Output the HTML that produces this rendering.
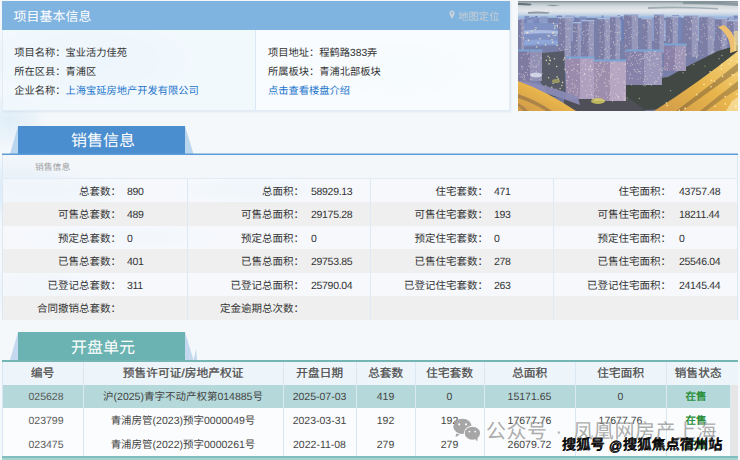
<!DOCTYPE html>
<html lang="zh-CN">
<head>
<meta charset="utf-8">
<style>
*{margin:0;padding:0;box-sizing:border-box}
html,body{width:740px;height:460px;overflow:hidden}
body{position:relative;text-rendering:geometricPrecision;font-family:"Liberation Sans",sans-serif;background:#f2f6fa;color:#333}
.a{position:absolute;white-space:nowrap}
#bg{position:absolute;left:0;top:0;width:740px;height:460px}
/* top card */
#card{left:2px;top:1px;width:508px;height:110px;background:rgba(249,252,255,0.8);border:1px solid #e2ecf5;box-shadow:1px 1px 2px rgba(180,200,220,0.35)}
#cardhd{left:2px;top:1px;width:508px;height:29px;background:#7fb3e0}
.t13{font-size:13px;color:#fff;line-height:13px}
.inf{font-size:10.25px;line-height:12px;color:#333}
.lnk{color:#2274cc}
/* photo */
#photo{left:518px;top:1px;width:220px;height:110px;overflow:hidden}
/* sales */
.tabtxt{font-size:16px;line-height:16px;color:#fff;font-weight:350}
.lbl{font-size:10.5px;line-height:12px;color:#333;text-align:right}
.val{font-size:10.5px;line-height:12px;color:#333;letter-spacing:-0.3px}
.row{position:absolute;left:2px;width:736px;height:23.5px}
.th{font-size:11.75px;line-height:12px;color:#555;font-weight:500;text-shadow:0.35px 0 0 rgba(85,85,85,0.8);text-align:center}
.wm1{font-size:20px;line-height:24px;letter-spacing:0.55px;color:rgba(150,150,150,0.8)}
.wm2{font-size:14.2px;line-height:16px;color:#111;font-weight:normal;text-shadow:-0.5px 0.5px 0 #000,0.5px 0 0 #222}
.td.st{color:#2b8f3b;font-weight:bold}
.td{font-size:10.5px;line-height:12px;color:#444;text-align:center}
</style>
</head>
<body>
<svg id="bg" width="740" height="460" viewBox="0 0 740 460">
  <defs>
    <radialGradient id="cl" cx="50%" cy="50%" r="50%">
      <stop offset="0" stop-color="#d6e9f7" stop-opacity="1"/>
      <stop offset="0.6" stop-color="#dcecf8" stop-opacity="0.6"/>
      <stop offset="1" stop-color="#e4f0fa" stop-opacity="0"/>
    </radialGradient>
  </defs>
  <rect width="740" height="460" fill="#f5f8fb"/>
  <ellipse cx="20" cy="190" rx="70" ry="35" fill="url(#cl)"/>
  <ellipse cx="40" cy="290" rx="60" ry="30" fill="url(#cl)" opacity="0.6"/>
  <ellipse cx="90" cy="60" rx="110" ry="45" fill="url(#cl)"/>
  <ellipse cx="10" cy="120" rx="40" ry="30" fill="url(#cl)" opacity="0.7"/>
  <ellipse cx="400" cy="70" rx="90" ry="35" fill="url(#cl)" opacity="0.4"/>
  <ellipse cx="60" cy="190" rx="90" ry="16" fill="url(#cl)"/>
  <ellipse cx="250" cy="190" rx="80" ry="14" fill="url(#cl)" opacity="0.9"/>
  <ellipse cx="120" cy="237" rx="110" ry="14" fill="url(#cl)" opacity="0.5"/>
</svg>

<!-- top card -->
<div class="a" id="card"></div>
<div class="a" style="left:3px;top:30px;width:252px;height:80px;background:rgba(225,239,250,0.25)"></div>
<div class="a" style="left:255px;top:30px;width:1px;height:80px;background:#d9e8f4"></div>
<div class="a" id="cardhd"></div>
<div class="a t13" style="left:13.5px;top:9.5px">项目基本信息</div>
<div class="a" style="left:449px;top:10.3px;width:6px;height:10px">
  <svg style="display:block" width="6" height="10" viewBox="0 0 6 10"><path d="M3 0.5C1.5 0.5 0.4 1.6 0.4 3.1C0.4 5 3 9 3 9C3 9 5.6 5 5.6 3.1C5.6 1.6 4.5 0.5 3 0.5Z" fill="#c9d3dc"/><circle cx="3" cy="3.1" r="1" fill="#7fb3e0"/></svg>
</div>
<div class="a" style="left:458px;top:12px;font-size:10.3px;line-height:12px;color:#c6ced4">地图定位</div>

<div class="a inf" style="left:14.3px;top:48px">项目名称：宝业活力佳苑</div>
<div class="a inf" style="left:14.3px;top:66.7px">所在区县：青浦区</div>
<div class="a inf" style="left:14.3px;top:86.2px">企业名称：<span class="lnk">上海宝延房地产开发有限公司</span></div>
<div class="a inf" style="left:268px;top:48px">项目地址：程鹤路383弄</div>
<div class="a inf" style="left:268px;top:66.7px">所属板块：青浦北部板块</div>
<div class="a inf lnk" style="left:268px;top:86.2px">点击查看楼盘介绍</div>

<!-- photo -->
<div class="a" id="photo">
<svg style="display:block" width="220" height="110" viewBox="0 0 220 110">
<defs>
<linearGradient id="sky" x1="0" y1="0" x2="0" y2="1">
<stop offset="0" stop-color="#7c8a92"/>
<stop offset="0.02" stop-color="#b4c0c4"/>
<stop offset="0.05" stop-color="#d4dbde"/>
<stop offset="0.09" stop-color="#e6e8ec"/>
<stop offset="0.12" stop-color="#cad8e6"/>
<stop offset="0.15" stop-color="#96b6de"/>
<stop offset="0.2" stop-color="#8aa2ce"/>
<stop offset="1" stop-color="#6c7098"/>
</linearGradient>
<linearGradient id="rd" x1="1" y1="0" x2="0" y2="1">
<stop offset="0" stop-color="#f6d680"/>
<stop offset="0.5" stop-color="#e8b44c"/>
<stop offset="1" stop-color="#d09a48"/>
</linearGradient>
<filter id="bl" x="0" y="0" width="1" height="1"><feGaussianBlur stdDeviation="0.7"/></filter>
</defs><g filter="url(#bl)">
<rect width="220" height="110" fill="url(#sky)"/>
<path d="M0 2 Q8 1.5 14 3 L12 4.5 Q5 4 0 4Z" fill="#505c66" opacity="0.8"/>
<path d="M10 11 Q20 10 32 11.5 L30 12.8 Q20 12 10 12.8Z" fill="#5a6878" opacity="0.6"/>
<path d="M28 4 Q35 3.5 42 4.5 L35 5.2Z" fill="#5a6a76" opacity="0.6"/>
<path d="M130 6 Q160 4.5 200 7 L200 8.5 Q160 6.5 130 8Z" fill="#7a8c96" opacity="0.6"/>
<path d="M165 1 Q195 0 220 2 L220 5 Q195 3 165 3Z" fill="#6c7c86" opacity="0.6"/>
<rect x="0" y="17" width="220" height="80" fill="#7880aa"/>
<rect x="99.5" y="21.4" width="4.8" height="18.6" fill="#9aa8d0"/>
<rect x="99.4" y="15.5" width="6.3" height="24.5" fill="#6e7eb0"/>
<rect x="104.7" y="15.5" width="5.1" height="24.5" fill="#9aa8d0"/>
<rect x="66.7" y="20.5" width="2.5" height="19.5" fill="#8090c0"/>
<rect x="131.0" y="17.6" width="4.0" height="22.4" fill="#6e7eb0"/>
<rect x="143.0" y="20.7" width="5.1" height="19.3" fill="#8090c0"/>
<rect x="13.1" y="15.9" width="3.0" height="24.1" fill="#8090c0"/>
<rect x="171.2" y="18.7" width="3.6" height="21.3" fill="#7686b8"/>
<rect x="114.2" y="18.0" width="5.2" height="22.0" fill="#8090c0"/>
<rect x="100.6" y="22.0" width="3.4" height="18.0" fill="#8090c0"/>
<rect x="155.7" y="15.8" width="3.6" height="24.2" fill="#8c9cc8"/>
<rect x="6.5" y="14.9" width="4.8" height="25.1" fill="#8090c0"/>
<rect x="186.2" y="21.7" width="3.9" height="18.3" fill="#8090c0"/>
<rect x="47.0" y="14.4" width="6.6" height="25.6" fill="#9aa8d0"/>
<rect x="215.7" y="14.6" width="4.0" height="25.4" fill="#7686b8"/>
<rect x="171.3" y="14.7" width="3.3" height="25.3" fill="#8c9cc8"/>
<rect x="3.3" y="21.4" width="4.1" height="18.6" fill="#7686b8"/>
<rect x="54.2" y="14.5" width="2.5" height="25.5" fill="#9aa8d0"/>
<rect x="39.1" y="17.6" width="4.8" height="22.4" fill="#7686b8"/>
<rect x="216.8" y="17.4" width="5.8" height="22.6" fill="#9aa8d0"/>
<rect x="25.6" y="15.7" width="4.1" height="24.3" fill="#8c9cc8"/>
<rect x="190.2" y="18.7" width="6.9" height="21.3" fill="#8090c0"/>
<rect x="46.4" y="20.8" width="4.0" height="19.2" fill="#6e7eb0"/>
<rect x="22.1" y="15.7" width="6.9" height="24.3" fill="#8c9cc8"/>
<rect x="2.1" y="20.6" width="5.1" height="19.4" fill="#9aa8d0"/>
<rect x="16.1" y="18.7" width="2.5" height="21.3" fill="#7686b8"/>
<rect x="3.4" y="19.0" width="3.8" height="21.0" fill="#7686b8"/>
<rect x="211.0" y="18.6" width="4.4" height="21.4" fill="#9aa8d0"/>
<rect x="40.2" y="21.3" width="2.8" height="18.7" fill="#6e7eb0"/>
<rect x="54.9" y="19.9" width="2.9" height="20.1" fill="#6e7eb0"/>
<rect x="43.2" y="21.1" width="6.8" height="18.9" fill="#6e7eb0"/>
<rect x="17.3" y="14.9" width="2.2" height="25.1" fill="#6e7eb0"/>
<rect x="211.8" y="19.6" width="3.2" height="20.4" fill="#8c9cc8"/>
<rect x="92.6" y="17.9" width="6.5" height="22.1" fill="#6e7eb0"/>
<rect x="38.6" y="14.6" width="5.6" height="25.4" fill="#7686b8"/>
<rect x="105.4" y="18.9" width="5.3" height="21.1" fill="#8090c0"/>
<rect x="61.6" y="15.6" width="6.6" height="24.4" fill="#8090c0"/>
<rect x="15.2" y="16.0" width="4.1" height="24.0" fill="#8090c0"/>
<rect x="38.8" y="18.6" width="3.8" height="21.4" fill="#7686b8"/>
<rect x="20.3" y="17.6" width="2.7" height="22.4" fill="#8c9cc8"/>
<rect x="144.5" y="18.7" width="5.5" height="21.3" fill="#7686b8"/>
<rect x="129.8" y="17.8" width="6.6" height="22.2" fill="#8c9cc8"/>
<rect x="154.2" y="14.2" width="6.8" height="25.8" fill="#8090c0"/>
<rect x="106.1" y="16.6" width="5.7" height="23.4" fill="#8090c0"/>
<rect x="16.6" y="19.9" width="4.7" height="20.1" fill="#7686b8"/>
<rect x="174.5" y="16.8" width="6.6" height="23.2" fill="#9aa8d0"/>
<rect x="198.2" y="17.3" width="6.4" height="22.7" fill="#8090c0"/>
<rect x="190.0" y="19.0" width="4.9" height="21.0" fill="#9aa8d0"/>
<rect x="83.4" y="14.6" width="2.1" height="25.4" fill="#8090c0"/>
<rect x="140.7" y="21.0" width="7.0" height="19.0" fill="#8c9cc8"/>
<rect x="85.5" y="18.6" width="5.7" height="21.4" fill="#9aa8d0"/>
<rect x="101.8" y="18.1" width="4.7" height="21.9" fill="#6e7eb0"/>
<rect x="6.6" y="17.8" width="5.0" height="22.2" fill="#7686b8"/>
<rect x="210.6" y="20.2" width="2.6" height="19.8" fill="#9aa8d0"/>
<rect x="56.3" y="16.4" width="2.1" height="23.6" fill="#6e7eb0"/>
<rect x="44.6" y="21.2" width="2.8" height="18.8" fill="#9aa8d0"/>
<rect x="109.6" y="17.2" width="3.2" height="22.8" fill="#8c9cc8"/>
<rect x="43.7" y="20.4" width="4.2" height="19.6" fill="#7686b8"/>
<rect x="193.7" y="18.7" width="3.9" height="21.3" fill="#8c9cc8"/>
<rect x="46.2" y="16.8" width="2.7" height="23.2" fill="#8090c0"/>
<rect x="156.5" y="16.2" width="6.8" height="23.8" fill="#7686b8"/>
<rect x="24.8" y="21.4" width="4.4" height="18.6" fill="#9aa8d0"/>
<rect x="84.2" y="19.4" width="4.6" height="20.6" fill="#6e7eb0"/>
<rect x="99.5" y="14.3" width="2.4" height="25.7" fill="#6e7eb0"/>
<rect x="9.1" y="18.6" width="5.5" height="21.4" fill="#8c9cc8"/>
<rect x="142.8" y="19.1" width="4.8" height="20.9" fill="#9aa8d0"/>
<rect x="100.1" y="20.6" width="2.1" height="19.4" fill="#7686b8"/>
<rect x="171.4" y="21.9" width="6.0" height="18.1" fill="#8090c0"/>
<rect x="98.2" y="19.2" width="5.1" height="20.8" fill="#8c9cc8"/>
<rect x="210.9" y="15.6" width="5.4" height="24.4" fill="#9aa8d0"/>
<path d="M0 22 L40 22 L42 44 L0 46Z" fill="#8092c4"/>
<path d="M0 30 Q20 28 42 30 L42 33 Q20 31 0 34Z" fill="#b8c8e8" opacity="0.8"/>
<path d="M0 40 Q20 37 42 40 L42 44 Q20 42 0 45Z" fill="#90aada" opacity="0.9"/>
<circle cx="10.2" cy="39.1" r="0.7" fill="#fff0c8" opacity="0.85"/>
<circle cx="30.2" cy="34.8" r="0.7" fill="#fff0c8" opacity="0.85"/>
<circle cx="1.4" cy="27.4" r="0.7" fill="#fff0c8" opacity="0.85"/>
<circle cx="31.1" cy="35.0" r="0.7" fill="#fff0c8" opacity="0.85"/>
<circle cx="37.9" cy="34.0" r="0.7" fill="#fff0c8" opacity="0.85"/>
<circle cx="39.9" cy="25.8" r="0.7" fill="#fff0c8" opacity="0.85"/>
<circle cx="34.0" cy="38.8" r="0.7" fill="#fff0c8" opacity="0.85"/>
<circle cx="9.0" cy="31.9" r="0.7" fill="#fff0c8" opacity="0.85"/>
<circle cx="35.7" cy="31.3" r="0.7" fill="#fff0c8" opacity="0.85"/>
<circle cx="18.0" cy="26.7" r="0.7" fill="#fff0c8" opacity="0.85"/>
<circle cx="35.5" cy="22.2" r="0.7" fill="#fff0c8" opacity="0.85"/>
<circle cx="22.0" cy="37.7" r="0.7" fill="#fff0c8" opacity="0.85"/>
<circle cx="20.1" cy="41.7" r="0.7" fill="#fff0c8" opacity="0.85"/>
<circle cx="13.7" cy="29.8" r="0.7" fill="#fff0c8" opacity="0.85"/>
<circle cx="39.3" cy="24.4" r="0.7" fill="#fff0c8" opacity="0.85"/>
<circle cx="34.6" cy="41.2" r="0.7" fill="#fff0c8" opacity="0.85"/>
<circle cx="37.0" cy="25.0" r="0.7" fill="#fff0c8" opacity="0.85"/>
<circle cx="9.7" cy="31.4" r="0.7" fill="#fff0c8" opacity="0.85"/>
<circle cx="3.5" cy="29.4" r="0.7" fill="#fff0c8" opacity="0.85"/>
<circle cx="39.1" cy="44.4" r="0.7" fill="#fff0c8" opacity="0.85"/>
<circle cx="10.5" cy="39.2" r="0.7" fill="#fff0c8" opacity="0.85"/>
<circle cx="0.6" cy="34.1" r="0.7" fill="#fff0c8" opacity="0.85"/>
<circle cx="1.5" cy="30.2" r="0.7" fill="#fff0c8" opacity="0.85"/>
<circle cx="16.9" cy="28.6" r="0.7" fill="#fff0c8" opacity="0.85"/>
<circle cx="36.8" cy="27.2" r="0.7" fill="#fff0c8" opacity="0.85"/>
<circle cx="34.7" cy="32.3" r="0.7" fill="#fff0c8" opacity="0.85"/>
<circle cx="1.4" cy="34.8" r="0.7" fill="#fff0c8" opacity="0.85"/>
<circle cx="27.5" cy="44.0" r="0.7" fill="#fff0c8" opacity="0.85"/>
<circle cx="18.8" cy="46.0" r="0.7" fill="#fff0c8" opacity="0.85"/>
<circle cx="36.0" cy="34.4" r="0.7" fill="#fff0c8" opacity="0.85"/>
<rect x="0" y="18" width="6" height="32" fill="#7c7ea6"/>
<rect x="3.3" y="18" width="2.7" height="32" fill="#9698bc"/>
<rect x="-0.5" y="17" width="7" height="1.3" fill="#a8b8dc"/>
<rect x="4.1" y="32.1" width="0.9" height="0.9" fill="#e8e0d8" opacity="0.7"/>
<rect x="5.3" y="36.5" width="0.9" height="0.9" fill="#e8e0d8" opacity="0.7"/>
<rect x="4.1" y="42.3" width="0.9" height="0.9" fill="#e8e0d8" opacity="0.7"/>
<rect x="2.6" y="35.9" width="0.9" height="0.9" fill="#e8e0d8" opacity="0.7"/>
<rect x="5.0" y="36.0" width="0.9" height="0.9" fill="#e8e0d8" opacity="0.7"/>
<rect x="1.0" y="34.5" width="0.9" height="0.9" fill="#e8e0d8" opacity="0.7"/>
<rect x="5.4" y="26.2" width="0.9" height="0.9" fill="#e8e0d8" opacity="0.7"/>
<rect x="4.0" y="48.6" width="0.9" height="0.9" fill="#e8e0d8" opacity="0.7"/>
<rect x="5.2" y="37.5" width="0.9" height="0.9" fill="#e8e0d8" opacity="0.7"/>
<rect x="1.8" y="22.5" width="0.9" height="0.9" fill="#e8e0d8" opacity="0.7"/>
<rect x="3.3" y="26.7" width="0.9" height="0.9" fill="#e8e0d8" opacity="0.7"/>
<rect x="3.0" y="31.2" width="0.9" height="0.9" fill="#e8e0d8" opacity="0.7"/>
<rect x="0.7" y="18.2" width="0.9" height="0.9" fill="#e8e0d8" opacity="0.7"/>
<rect x="40" y="17" width="13" height="53" fill="#7c7ea6"/>
<rect x="47.1" y="17" width="5.9" height="53" fill="#9698bc"/>
<rect x="39.5" y="16" width="14" height="1.3" fill="#a8b8dc"/>
<rect x="44.9" y="45.5" width="0.9" height="0.9" fill="#e8e0d8" opacity="0.7"/>
<rect x="40.6" y="65.6" width="0.9" height="0.9" fill="#e8e0d8" opacity="0.7"/>
<rect x="47.1" y="69.4" width="0.9" height="0.9" fill="#e8e0d8" opacity="0.7"/>
<rect x="41.6" y="21.9" width="0.9" height="0.9" fill="#e8e0d8" opacity="0.7"/>
<rect x="42.2" y="66.3" width="0.9" height="0.9" fill="#e8e0d8" opacity="0.7"/>
<rect x="46.0" y="65.8" width="0.9" height="0.9" fill="#e8e0d8" opacity="0.7"/>
<rect x="50.4" y="38.4" width="0.9" height="0.9" fill="#e8e0d8" opacity="0.7"/>
<rect x="43.2" y="43.1" width="0.9" height="0.9" fill="#e8e0d8" opacity="0.7"/>
<rect x="44.4" y="64.7" width="0.9" height="0.9" fill="#e8e0d8" opacity="0.7"/>
<rect x="52.2" y="65.8" width="0.9" height="0.9" fill="#e8e0d8" opacity="0.7"/>
<rect x="46.8" y="22.8" width="0.9" height="0.9" fill="#e8e0d8" opacity="0.7"/>
<rect x="45.5" y="18.6" width="0.9" height="0.9" fill="#e8e0d8" opacity="0.7"/>
<rect x="43.4" y="54.2" width="0.9" height="0.9" fill="#e8e0d8" opacity="0.7"/>
<rect x="52.7" y="18.9" width="0.9" height="0.9" fill="#e8e0d8" opacity="0.7"/>
<rect x="42.0" y="17.6" width="0.9" height="0.9" fill="#e8e0d8" opacity="0.7"/>
<rect x="43.7" y="55.4" width="0.9" height="0.9" fill="#e8e0d8" opacity="0.7"/>
<rect x="43.2" y="43.4" width="0.9" height="0.9" fill="#e8e0d8" opacity="0.7"/>
<rect x="46.5" y="47.9" width="0.9" height="0.9" fill="#e8e0d8" opacity="0.7"/>
<rect x="51.1" y="50.0" width="0.9" height="0.9" fill="#e8e0d8" opacity="0.7"/>
<rect x="49.3" y="54.2" width="0.9" height="0.9" fill="#e8e0d8" opacity="0.7"/>
<rect x="51.4" y="18.2" width="0.9" height="0.9" fill="#e8e0d8" opacity="0.7"/>
<rect x="48.2" y="60.7" width="0.9" height="0.9" fill="#e8e0d8" opacity="0.7"/>
<rect x="48.0" y="45.5" width="0.9" height="0.9" fill="#e8e0d8" opacity="0.7"/>
<rect x="51.2" y="45.3" width="0.9" height="0.9" fill="#e8e0d8" opacity="0.7"/>
<rect x="42.8" y="28.5" width="0.9" height="0.9" fill="#e8e0d8" opacity="0.7"/>
<rect x="47.1" y="48.1" width="0.9" height="0.9" fill="#e8e0d8" opacity="0.7"/>
<rect x="41.8" y="65.5" width="0.9" height="0.9" fill="#e8e0d8" opacity="0.7"/>
<rect x="48.2" y="35.4" width="0.9" height="0.9" fill="#e8e0d8" opacity="0.7"/>
<rect x="42.4" y="49.0" width="0.9" height="0.9" fill="#e8e0d8" opacity="0.7"/>
<rect x="51.6" y="27.3" width="0.9" height="0.9" fill="#e8e0d8" opacity="0.7"/>
<rect x="50.1" y="27.3" width="0.9" height="0.9" fill="#e8e0d8" opacity="0.7"/>
<rect x="41.3" y="64.1" width="0.9" height="0.9" fill="#e8e0d8" opacity="0.7"/>
<rect x="41.7" y="21.7" width="0.9" height="0.9" fill="#e8e0d8" opacity="0.7"/>
<rect x="45.0" y="40.0" width="0.9" height="0.9" fill="#e8e0d8" opacity="0.7"/>
<rect x="52.2" y="45.8" width="0.9" height="0.9" fill="#e8e0d8" opacity="0.7"/>
<rect x="49.2" y="27.6" width="0.9" height="0.9" fill="#e8e0d8" opacity="0.7"/>
<rect x="48.2" y="59.3" width="0.9" height="0.9" fill="#e8e0d8" opacity="0.7"/>
<rect x="41.2" y="47.2" width="0.9" height="0.9" fill="#e8e0d8" opacity="0.7"/>
<rect x="44.6" y="60.5" width="0.9" height="0.9" fill="#e8e0d8" opacity="0.7"/>
<rect x="44.7" y="54.3" width="0.9" height="0.9" fill="#e8e0d8" opacity="0.7"/>
<rect x="48.3" y="35.2" width="0.9" height="0.9" fill="#e8e0d8" opacity="0.7"/>
<rect x="53.0" y="61.1" width="0.9" height="0.9" fill="#e8e0d8" opacity="0.7"/>
<rect x="50.4" y="42.5" width="0.9" height="0.9" fill="#e8e0d8" opacity="0.7"/>
<rect x="40.3" y="57.4" width="0.9" height="0.9" fill="#e8e0d8" opacity="0.7"/>
<rect x="48.0" y="65.0" width="0.9" height="0.9" fill="#e8e0d8" opacity="0.7"/>
<rect x="46.3" y="27.0" width="0.9" height="0.9" fill="#e8e0d8" opacity="0.7"/>
<rect x="41.5" y="26.1" width="0.9" height="0.9" fill="#e8e0d8" opacity="0.7"/>
<rect x="42.1" y="32.0" width="0.9" height="0.9" fill="#e8e0d8" opacity="0.7"/>
<rect x="48.7" y="47.7" width="0.9" height="0.9" fill="#e8e0d8" opacity="0.7"/>
<rect x="55" y="22" width="8" height="40" fill="#7c7ea6"/>
<rect x="59.4" y="22" width="3.6" height="40" fill="#9698bc"/>
<rect x="54.5" y="21" width="9" height="1.3" fill="#a8b8dc"/>
<rect x="56.1" y="49.2" width="0.9" height="0.9" fill="#e8e0d8" opacity="0.7"/>
<rect x="55.6" y="25.9" width="0.9" height="0.9" fill="#e8e0d8" opacity="0.7"/>
<rect x="58.1" y="39.1" width="0.9" height="0.9" fill="#e8e0d8" opacity="0.7"/>
<rect x="57.8" y="30.4" width="0.9" height="0.9" fill="#e8e0d8" opacity="0.7"/>
<rect x="58.0" y="47.4" width="0.9" height="0.9" fill="#e8e0d8" opacity="0.7"/>
<rect x="55.3" y="30.0" width="0.9" height="0.9" fill="#e8e0d8" opacity="0.7"/>
<rect x="58.3" y="36.4" width="0.9" height="0.9" fill="#e8e0d8" opacity="0.7"/>
<rect x="58.0" y="58.9" width="0.9" height="0.9" fill="#e8e0d8" opacity="0.7"/>
<rect x="59.8" y="25.8" width="0.9" height="0.9" fill="#e8e0d8" opacity="0.7"/>
<rect x="61.3" y="34.9" width="0.9" height="0.9" fill="#e8e0d8" opacity="0.7"/>
<rect x="55.7" y="55.7" width="0.9" height="0.9" fill="#e8e0d8" opacity="0.7"/>
<rect x="62.0" y="58.3" width="0.9" height="0.9" fill="#e8e0d8" opacity="0.7"/>
<rect x="62.5" y="44.8" width="0.9" height="0.9" fill="#e8e0d8" opacity="0.7"/>
<rect x="56.5" y="45.4" width="0.9" height="0.9" fill="#e8e0d8" opacity="0.7"/>
<rect x="57.7" y="52.5" width="0.9" height="0.9" fill="#e8e0d8" opacity="0.7"/>
<rect x="57.2" y="26.7" width="0.9" height="0.9" fill="#e8e0d8" opacity="0.7"/>
<rect x="60.9" y="28.4" width="0.9" height="0.9" fill="#e8e0d8" opacity="0.7"/>
<rect x="62.5" y="27.3" width="0.9" height="0.9" fill="#e8e0d8" opacity="0.7"/>
<rect x="57.6" y="43.6" width="0.9" height="0.9" fill="#e8e0d8" opacity="0.7"/>
<rect x="58.0" y="39.3" width="0.9" height="0.9" fill="#e8e0d8" opacity="0.7"/>
<rect x="56.5" y="30.3" width="0.9" height="0.9" fill="#e8e0d8" opacity="0.7"/>
<rect x="56.5" y="53.9" width="0.9" height="0.9" fill="#e8e0d8" opacity="0.7"/>
<rect x="64" y="20" width="12" height="42" fill="#7c7ea6"/>
<rect x="70.6" y="20" width="5.4" height="42" fill="#9698bc"/>
<rect x="63.5" y="19" width="13" height="1.3" fill="#a8b8dc"/>
<rect x="67.6" y="24.2" width="0.9" height="0.9" fill="#e8e0d8" opacity="0.7"/>
<rect x="74.7" y="61.6" width="0.9" height="0.9" fill="#e8e0d8" opacity="0.7"/>
<rect x="74.8" y="22.1" width="0.9" height="0.9" fill="#e8e0d8" opacity="0.7"/>
<rect x="67.3" y="60.4" width="0.9" height="0.9" fill="#e8e0d8" opacity="0.7"/>
<rect x="67.6" y="29.1" width="0.9" height="0.9" fill="#e8e0d8" opacity="0.7"/>
<rect x="68.9" y="27.6" width="0.9" height="0.9" fill="#e8e0d8" opacity="0.7"/>
<rect x="64.9" y="41.6" width="0.9" height="0.9" fill="#e8e0d8" opacity="0.7"/>
<rect x="70.0" y="29.0" width="0.9" height="0.9" fill="#e8e0d8" opacity="0.7"/>
<rect x="65.4" y="36.6" width="0.9" height="0.9" fill="#e8e0d8" opacity="0.7"/>
<rect x="70.9" y="24.8" width="0.9" height="0.9" fill="#e8e0d8" opacity="0.7"/>
<rect x="65.3" y="30.0" width="0.9" height="0.9" fill="#e8e0d8" opacity="0.7"/>
<rect x="69.3" y="41.2" width="0.9" height="0.9" fill="#e8e0d8" opacity="0.7"/>
<rect x="73.1" y="47.2" width="0.9" height="0.9" fill="#e8e0d8" opacity="0.7"/>
<rect x="64.1" y="30.9" width="0.9" height="0.9" fill="#e8e0d8" opacity="0.7"/>
<rect x="67.3" y="34.3" width="0.9" height="0.9" fill="#e8e0d8" opacity="0.7"/>
<rect x="70.5" y="37.5" width="0.9" height="0.9" fill="#e8e0d8" opacity="0.7"/>
<rect x="70.2" y="55.5" width="0.9" height="0.9" fill="#e8e0d8" opacity="0.7"/>
<rect x="65.2" y="38.7" width="0.9" height="0.9" fill="#e8e0d8" opacity="0.7"/>
<rect x="71.7" y="43.1" width="0.9" height="0.9" fill="#e8e0d8" opacity="0.7"/>
<rect x="72.0" y="60.1" width="0.9" height="0.9" fill="#e8e0d8" opacity="0.7"/>
<rect x="68.6" y="59.4" width="0.9" height="0.9" fill="#e8e0d8" opacity="0.7"/>
<rect x="68.6" y="60.7" width="0.9" height="0.9" fill="#e8e0d8" opacity="0.7"/>
<rect x="74.3" y="42.8" width="0.9" height="0.9" fill="#e8e0d8" opacity="0.7"/>
<rect x="71.2" y="38.0" width="0.9" height="0.9" fill="#e8e0d8" opacity="0.7"/>
<rect x="69.9" y="31.9" width="0.9" height="0.9" fill="#e8e0d8" opacity="0.7"/>
<rect x="68.8" y="33.1" width="0.9" height="0.9" fill="#e8e0d8" opacity="0.7"/>
<rect x="70.4" y="40.3" width="0.9" height="0.9" fill="#e8e0d8" opacity="0.7"/>
<rect x="67.2" y="59.0" width="0.9" height="0.9" fill="#e8e0d8" opacity="0.7"/>
<rect x="72.0" y="51.4" width="0.9" height="0.9" fill="#e8e0d8" opacity="0.7"/>
<rect x="64.3" y="52.4" width="0.9" height="0.9" fill="#e8e0d8" opacity="0.7"/>
<rect x="71.0" y="46.6" width="0.9" height="0.9" fill="#e8e0d8" opacity="0.7"/>
<rect x="68.9" y="48.7" width="0.9" height="0.9" fill="#e8e0d8" opacity="0.7"/>
<rect x="64.6" y="33.2" width="0.9" height="0.9" fill="#e8e0d8" opacity="0.7"/>
<rect x="68.8" y="44.4" width="0.9" height="0.9" fill="#e8e0d8" opacity="0.7"/>
<rect x="72.7" y="33.4" width="0.9" height="0.9" fill="#e8e0d8" opacity="0.7"/>
<rect x="73.6" y="29.4" width="0.9" height="0.9" fill="#e8e0d8" opacity="0.7"/>
<rect x="80" y="18" width="12" height="46" fill="#7c7ea6"/>
<rect x="86.6" y="18" width="5.4" height="46" fill="#9698bc"/>
<rect x="79.5" y="17" width="13" height="1.3" fill="#a8b8dc"/>
<rect x="88.6" y="29.5" width="0.9" height="0.9" fill="#e8e0d8" opacity="0.7"/>
<rect x="89.1" y="20.1" width="0.9" height="0.9" fill="#e8e0d8" opacity="0.7"/>
<rect x="81.2" y="55.3" width="0.9" height="0.9" fill="#e8e0d8" opacity="0.7"/>
<rect x="90.9" y="24.6" width="0.9" height="0.9" fill="#e8e0d8" opacity="0.7"/>
<rect x="91.5" y="29.3" width="0.9" height="0.9" fill="#e8e0d8" opacity="0.7"/>
<rect x="88.5" y="20.3" width="0.9" height="0.9" fill="#e8e0d8" opacity="0.7"/>
<rect x="85.0" y="23.4" width="0.9" height="0.9" fill="#e8e0d8" opacity="0.7"/>
<rect x="90.3" y="34.4" width="0.9" height="0.9" fill="#e8e0d8" opacity="0.7"/>
<rect x="81.9" y="34.7" width="0.9" height="0.9" fill="#e8e0d8" opacity="0.7"/>
<rect x="81.7" y="37.2" width="0.9" height="0.9" fill="#e8e0d8" opacity="0.7"/>
<rect x="87.2" y="47.4" width="0.9" height="0.9" fill="#e8e0d8" opacity="0.7"/>
<rect x="88.2" y="34.7" width="0.9" height="0.9" fill="#e8e0d8" opacity="0.7"/>
<rect x="88.9" y="55.5" width="0.9" height="0.9" fill="#e8e0d8" opacity="0.7"/>
<rect x="81.6" y="31.3" width="0.9" height="0.9" fill="#e8e0d8" opacity="0.7"/>
<rect x="81.5" y="40.1" width="0.9" height="0.9" fill="#e8e0d8" opacity="0.7"/>
<rect x="86.0" y="32.2" width="0.9" height="0.9" fill="#e8e0d8" opacity="0.7"/>
<rect x="86.1" y="56.9" width="0.9" height="0.9" fill="#e8e0d8" opacity="0.7"/>
<rect x="83.3" y="46.1" width="0.9" height="0.9" fill="#e8e0d8" opacity="0.7"/>
<rect x="88.7" y="50.2" width="0.9" height="0.9" fill="#e8e0d8" opacity="0.7"/>
<rect x="82.3" y="30.8" width="0.9" height="0.9" fill="#e8e0d8" opacity="0.7"/>
<rect x="82.9" y="61.8" width="0.9" height="0.9" fill="#e8e0d8" opacity="0.7"/>
<rect x="86.0" y="48.0" width="0.9" height="0.9" fill="#e8e0d8" opacity="0.7"/>
<rect x="82.4" y="49.4" width="0.9" height="0.9" fill="#e8e0d8" opacity="0.7"/>
<rect x="87.5" y="18.4" width="0.9" height="0.9" fill="#e8e0d8" opacity="0.7"/>
<rect x="83.1" y="19.2" width="0.9" height="0.9" fill="#e8e0d8" opacity="0.7"/>
<rect x="80.5" y="28.2" width="0.9" height="0.9" fill="#e8e0d8" opacity="0.7"/>
<rect x="83.3" y="52.8" width="0.9" height="0.9" fill="#e8e0d8" opacity="0.7"/>
<rect x="91.0" y="25.4" width="0.9" height="0.9" fill="#e8e0d8" opacity="0.7"/>
<rect x="82.8" y="63.1" width="0.9" height="0.9" fill="#e8e0d8" opacity="0.7"/>
<rect x="85.8" y="34.3" width="0.9" height="0.9" fill="#e8e0d8" opacity="0.7"/>
<rect x="84.1" y="40.7" width="0.9" height="0.9" fill="#e8e0d8" opacity="0.7"/>
<rect x="81.6" y="58.0" width="0.9" height="0.9" fill="#e8e0d8" opacity="0.7"/>
<rect x="89.6" y="38.6" width="0.9" height="0.9" fill="#e8e0d8" opacity="0.7"/>
<rect x="89.9" y="56.5" width="0.9" height="0.9" fill="#e8e0d8" opacity="0.7"/>
<rect x="89.2" y="38.4" width="0.9" height="0.9" fill="#e8e0d8" opacity="0.7"/>
<rect x="89.0" y="35.9" width="0.9" height="0.9" fill="#e8e0d8" opacity="0.7"/>
<rect x="81.8" y="25.1" width="0.9" height="0.9" fill="#e8e0d8" opacity="0.7"/>
<rect x="90.0" y="45.4" width="0.9" height="0.9" fill="#e8e0d8" opacity="0.7"/>
<rect x="83.5" y="52.9" width="0.9" height="0.9" fill="#e8e0d8" opacity="0.7"/>
<rect x="92" y="16" width="10" height="46" fill="#7c7ea6"/>
<rect x="97.5" y="16" width="4.5" height="46" fill="#9698bc"/>
<rect x="91.5" y="15" width="11" height="1.3" fill="#a8b8dc"/>
<rect x="100.3" y="24.5" width="0.9" height="0.9" fill="#e8e0d8" opacity="0.7"/>
<rect x="98.5" y="42.7" width="0.9" height="0.9" fill="#e8e0d8" opacity="0.7"/>
<rect x="96.6" y="30.9" width="0.9" height="0.9" fill="#e8e0d8" opacity="0.7"/>
<rect x="97.4" y="35.9" width="0.9" height="0.9" fill="#e8e0d8" opacity="0.7"/>
<rect x="97.7" y="53.5" width="0.9" height="0.9" fill="#e8e0d8" opacity="0.7"/>
<rect x="96.6" y="53.9" width="0.9" height="0.9" fill="#e8e0d8" opacity="0.7"/>
<rect x="92.1" y="30.3" width="0.9" height="0.9" fill="#e8e0d8" opacity="0.7"/>
<rect x="101.1" y="43.8" width="0.9" height="0.9" fill="#e8e0d8" opacity="0.7"/>
<rect x="99.0" y="38.8" width="0.9" height="0.9" fill="#e8e0d8" opacity="0.7"/>
<rect x="99.6" y="31.1" width="0.9" height="0.9" fill="#e8e0d8" opacity="0.7"/>
<rect x="100.8" y="26.1" width="0.9" height="0.9" fill="#e8e0d8" opacity="0.7"/>
<rect x="98.6" y="31.0" width="0.9" height="0.9" fill="#e8e0d8" opacity="0.7"/>
<rect x="101.1" y="30.8" width="0.9" height="0.9" fill="#e8e0d8" opacity="0.7"/>
<rect x="96.4" y="43.4" width="0.9" height="0.9" fill="#e8e0d8" opacity="0.7"/>
<rect x="101.0" y="47.6" width="0.9" height="0.9" fill="#e8e0d8" opacity="0.7"/>
<rect x="94.8" y="40.4" width="0.9" height="0.9" fill="#e8e0d8" opacity="0.7"/>
<rect x="101.9" y="37.1" width="0.9" height="0.9" fill="#e8e0d8" opacity="0.7"/>
<rect x="94.2" y="60.5" width="0.9" height="0.9" fill="#e8e0d8" opacity="0.7"/>
<rect x="99.3" y="39.7" width="0.9" height="0.9" fill="#e8e0d8" opacity="0.7"/>
<rect x="92.8" y="54.1" width="0.9" height="0.9" fill="#e8e0d8" opacity="0.7"/>
<rect x="92.2" y="47.1" width="0.9" height="0.9" fill="#e8e0d8" opacity="0.7"/>
<rect x="97.8" y="52.6" width="0.9" height="0.9" fill="#e8e0d8" opacity="0.7"/>
<rect x="99.4" y="32.9" width="0.9" height="0.9" fill="#e8e0d8" opacity="0.7"/>
<rect x="95.9" y="23.1" width="0.9" height="0.9" fill="#e8e0d8" opacity="0.7"/>
<rect x="97.9" y="24.2" width="0.9" height="0.9" fill="#e8e0d8" opacity="0.7"/>
<rect x="92.9" y="36.9" width="0.9" height="0.9" fill="#e8e0d8" opacity="0.7"/>
<rect x="100.5" y="53.3" width="0.9" height="0.9" fill="#e8e0d8" opacity="0.7"/>
<rect x="94.2" y="18.7" width="0.9" height="0.9" fill="#e8e0d8" opacity="0.7"/>
<rect x="93.6" y="29.6" width="0.9" height="0.9" fill="#e8e0d8" opacity="0.7"/>
<rect x="92.2" y="54.7" width="0.9" height="0.9" fill="#e8e0d8" opacity="0.7"/>
<rect x="96.2" y="42.8" width="0.9" height="0.9" fill="#e8e0d8" opacity="0.7"/>
<rect x="95.1" y="41.1" width="0.9" height="0.9" fill="#e8e0d8" opacity="0.7"/>
<rect x="106" y="14" width="14" height="48" fill="#7c7ea6"/>
<rect x="113.7" y="14" width="6.3" height="48" fill="#9698bc"/>
<rect x="105.5" y="13" width="15" height="1.3" fill="#a8b8dc"/>
<rect x="110.7" y="27.1" width="0.9" height="0.9" fill="#e8e0d8" opacity="0.7"/>
<rect x="107.5" y="29.1" width="0.9" height="0.9" fill="#e8e0d8" opacity="0.7"/>
<rect x="106.4" y="45.4" width="0.9" height="0.9" fill="#e8e0d8" opacity="0.7"/>
<rect x="107.4" y="53.2" width="0.9" height="0.9" fill="#e8e0d8" opacity="0.7"/>
<rect x="111.9" y="48.2" width="0.9" height="0.9" fill="#e8e0d8" opacity="0.7"/>
<rect x="112.8" y="57.6" width="0.9" height="0.9" fill="#e8e0d8" opacity="0.7"/>
<rect x="110.7" y="36.0" width="0.9" height="0.9" fill="#e8e0d8" opacity="0.7"/>
<rect x="110.9" y="52.7" width="0.9" height="0.9" fill="#e8e0d8" opacity="0.7"/>
<rect x="110.7" y="20.6" width="0.9" height="0.9" fill="#e8e0d8" opacity="0.7"/>
<rect x="112.8" y="52.6" width="0.9" height="0.9" fill="#e8e0d8" opacity="0.7"/>
<rect x="107.0" y="43.7" width="0.9" height="0.9" fill="#e8e0d8" opacity="0.7"/>
<rect x="106.6" y="50.3" width="0.9" height="0.9" fill="#e8e0d8" opacity="0.7"/>
<rect x="119.8" y="30.8" width="0.9" height="0.9" fill="#e8e0d8" opacity="0.7"/>
<rect x="106.1" y="32.1" width="0.9" height="0.9" fill="#e8e0d8" opacity="0.7"/>
<rect x="107.2" y="36.3" width="0.9" height="0.9" fill="#e8e0d8" opacity="0.7"/>
<rect x="113.6" y="15.2" width="0.9" height="0.9" fill="#e8e0d8" opacity="0.7"/>
<rect x="111.1" y="14.5" width="0.9" height="0.9" fill="#e8e0d8" opacity="0.7"/>
<rect x="107.5" y="58.3" width="0.9" height="0.9" fill="#e8e0d8" opacity="0.7"/>
<rect x="118.8" y="25.8" width="0.9" height="0.9" fill="#e8e0d8" opacity="0.7"/>
<rect x="108.3" y="44.5" width="0.9" height="0.9" fill="#e8e0d8" opacity="0.7"/>
<rect x="115.6" y="29.4" width="0.9" height="0.9" fill="#e8e0d8" opacity="0.7"/>
<rect x="111.5" y="39.4" width="0.9" height="0.9" fill="#e8e0d8" opacity="0.7"/>
<rect x="109.8" y="56.5" width="0.9" height="0.9" fill="#e8e0d8" opacity="0.7"/>
<rect x="112.6" y="49.1" width="0.9" height="0.9" fill="#e8e0d8" opacity="0.7"/>
<rect x="110.2" y="21.5" width="0.9" height="0.9" fill="#e8e0d8" opacity="0.7"/>
<rect x="118.9" y="57.8" width="0.9" height="0.9" fill="#e8e0d8" opacity="0.7"/>
<rect x="116.5" y="14.8" width="0.9" height="0.9" fill="#e8e0d8" opacity="0.7"/>
<rect x="112.7" y="52.4" width="0.9" height="0.9" fill="#e8e0d8" opacity="0.7"/>
<rect x="110.4" y="23.5" width="0.9" height="0.9" fill="#e8e0d8" opacity="0.7"/>
<rect x="111.0" y="42.2" width="0.9" height="0.9" fill="#e8e0d8" opacity="0.7"/>
<rect x="114.4" y="36.7" width="0.9" height="0.9" fill="#e8e0d8" opacity="0.7"/>
<rect x="113.1" y="35.2" width="0.9" height="0.9" fill="#e8e0d8" opacity="0.7"/>
<rect x="118.5" y="33.3" width="0.9" height="0.9" fill="#e8e0d8" opacity="0.7"/>
<rect x="118.7" y="59.0" width="0.9" height="0.9" fill="#e8e0d8" opacity="0.7"/>
<rect x="114.8" y="59.2" width="0.9" height="0.9" fill="#e8e0d8" opacity="0.7"/>
<rect x="113.7" y="55.0" width="0.9" height="0.9" fill="#e8e0d8" opacity="0.7"/>
<rect x="112.8" y="33.3" width="0.9" height="0.9" fill="#e8e0d8" opacity="0.7"/>
<rect x="119.4" y="45.7" width="0.9" height="0.9" fill="#e8e0d8" opacity="0.7"/>
<rect x="116.8" y="18.4" width="0.9" height="0.9" fill="#e8e0d8" opacity="0.7"/>
<rect x="118.1" y="33.2" width="0.9" height="0.9" fill="#e8e0d8" opacity="0.7"/>
<rect x="109.0" y="20.4" width="0.9" height="0.9" fill="#e8e0d8" opacity="0.7"/>
<rect x="117.2" y="60.8" width="0.9" height="0.9" fill="#e8e0d8" opacity="0.7"/>
<rect x="117.1" y="51.2" width="0.9" height="0.9" fill="#e8e0d8" opacity="0.7"/>
<rect x="117.0" y="16.8" width="0.9" height="0.9" fill="#e8e0d8" opacity="0.7"/>
<rect x="118.9" y="56.8" width="0.9" height="0.9" fill="#e8e0d8" opacity="0.7"/>
<rect x="118.2" y="57.5" width="0.9" height="0.9" fill="#e8e0d8" opacity="0.7"/>
<rect x="112.3" y="25.8" width="0.9" height="0.9" fill="#e8e0d8" opacity="0.7"/>
<rect x="111.9" y="56.0" width="0.9" height="0.9" fill="#e8e0d8" opacity="0.7"/>
<rect x="124" y="18" width="10" height="42" fill="#7c7ea6"/>
<rect x="129.5" y="18" width="4.5" height="42" fill="#9698bc"/>
<rect x="123.5" y="17" width="11" height="1.3" fill="#a8b8dc"/>
<rect x="128.2" y="50.4" width="0.9" height="0.9" fill="#e8e0d8" opacity="0.7"/>
<rect x="125.4" y="56.1" width="0.9" height="0.9" fill="#e8e0d8" opacity="0.7"/>
<rect x="132.1" y="23.5" width="0.9" height="0.9" fill="#e8e0d8" opacity="0.7"/>
<rect x="131.4" y="44.0" width="0.9" height="0.9" fill="#e8e0d8" opacity="0.7"/>
<rect x="129.2" y="20.2" width="0.9" height="0.9" fill="#e8e0d8" opacity="0.7"/>
<rect x="129.7" y="25.5" width="0.9" height="0.9" fill="#e8e0d8" opacity="0.7"/>
<rect x="126.0" y="56.5" width="0.9" height="0.9" fill="#e8e0d8" opacity="0.7"/>
<rect x="125.5" y="23.4" width="0.9" height="0.9" fill="#e8e0d8" opacity="0.7"/>
<rect x="127.5" y="43.8" width="0.9" height="0.9" fill="#e8e0d8" opacity="0.7"/>
<rect x="129.3" y="55.4" width="0.9" height="0.9" fill="#e8e0d8" opacity="0.7"/>
<rect x="130.9" y="21.5" width="0.9" height="0.9" fill="#e8e0d8" opacity="0.7"/>
<rect x="131.5" y="40.8" width="0.9" height="0.9" fill="#e8e0d8" opacity="0.7"/>
<rect x="129.1" y="18.8" width="0.9" height="0.9" fill="#e8e0d8" opacity="0.7"/>
<rect x="125.9" y="26.1" width="0.9" height="0.9" fill="#e8e0d8" opacity="0.7"/>
<rect x="130.8" y="50.8" width="0.9" height="0.9" fill="#e8e0d8" opacity="0.7"/>
<rect x="128.4" y="19.6" width="0.9" height="0.9" fill="#e8e0d8" opacity="0.7"/>
<rect x="128.1" y="38.8" width="0.9" height="0.9" fill="#e8e0d8" opacity="0.7"/>
<rect x="133.5" y="58.5" width="0.9" height="0.9" fill="#e8e0d8" opacity="0.7"/>
<rect x="127.2" y="35.0" width="0.9" height="0.9" fill="#e8e0d8" opacity="0.7"/>
<rect x="129.6" y="59.9" width="0.9" height="0.9" fill="#e8e0d8" opacity="0.7"/>
<rect x="130.7" y="20.8" width="0.9" height="0.9" fill="#e8e0d8" opacity="0.7"/>
<rect x="124.7" y="23.9" width="0.9" height="0.9" fill="#e8e0d8" opacity="0.7"/>
<rect x="130.7" y="46.4" width="0.9" height="0.9" fill="#e8e0d8" opacity="0.7"/>
<rect x="131.5" y="50.9" width="0.9" height="0.9" fill="#e8e0d8" opacity="0.7"/>
<rect x="125.2" y="36.7" width="0.9" height="0.9" fill="#e8e0d8" opacity="0.7"/>
<rect x="132.6" y="47.9" width="0.9" height="0.9" fill="#e8e0d8" opacity="0.7"/>
<rect x="128.8" y="30.3" width="0.9" height="0.9" fill="#e8e0d8" opacity="0.7"/>
<rect x="125.1" y="50.4" width="0.9" height="0.9" fill="#e8e0d8" opacity="0.7"/>
<rect x="132.6" y="53.5" width="0.9" height="0.9" fill="#e8e0d8" opacity="0.7"/>
<rect x="131.2" y="55.9" width="0.9" height="0.9" fill="#e8e0d8" opacity="0.7"/>
<rect x="136" y="14" width="10" height="38" fill="#7c7ea6"/>
<rect x="141.5" y="14" width="4.5" height="38" fill="#9698bc"/>
<rect x="135.5" y="13" width="11" height="1.3" fill="#a8b8dc"/>
<rect x="137.5" y="37.9" width="0.9" height="0.9" fill="#e8e0d8" opacity="0.7"/>
<rect x="145.4" y="42.5" width="0.9" height="0.9" fill="#e8e0d8" opacity="0.7"/>
<rect x="145.5" y="42.7" width="0.9" height="0.9" fill="#e8e0d8" opacity="0.7"/>
<rect x="141.6" y="17.3" width="0.9" height="0.9" fill="#e8e0d8" opacity="0.7"/>
<rect x="137.9" y="28.3" width="0.9" height="0.9" fill="#e8e0d8" opacity="0.7"/>
<rect x="137.1" y="25.8" width="0.9" height="0.9" fill="#e8e0d8" opacity="0.7"/>
<rect x="138.7" y="31.9" width="0.9" height="0.9" fill="#e8e0d8" opacity="0.7"/>
<rect x="142.4" y="31.0" width="0.9" height="0.9" fill="#e8e0d8" opacity="0.7"/>
<rect x="139.8" y="17.9" width="0.9" height="0.9" fill="#e8e0d8" opacity="0.7"/>
<rect x="142.2" y="19.0" width="0.9" height="0.9" fill="#e8e0d8" opacity="0.7"/>
<rect x="142.3" y="20.8" width="0.9" height="0.9" fill="#e8e0d8" opacity="0.7"/>
<rect x="137.9" y="15.4" width="0.9" height="0.9" fill="#e8e0d8" opacity="0.7"/>
<rect x="140.6" y="40.7" width="0.9" height="0.9" fill="#e8e0d8" opacity="0.7"/>
<rect x="137.0" y="15.2" width="0.9" height="0.9" fill="#e8e0d8" opacity="0.7"/>
<rect x="145.9" y="30.5" width="0.9" height="0.9" fill="#e8e0d8" opacity="0.7"/>
<rect x="143.7" y="27.0" width="0.9" height="0.9" fill="#e8e0d8" opacity="0.7"/>
<rect x="144.2" y="49.2" width="0.9" height="0.9" fill="#e8e0d8" opacity="0.7"/>
<rect x="137.4" y="21.8" width="0.9" height="0.9" fill="#e8e0d8" opacity="0.7"/>
<rect x="137.5" y="40.3" width="0.9" height="0.9" fill="#e8e0d8" opacity="0.7"/>
<rect x="140.8" y="49.0" width="0.9" height="0.9" fill="#e8e0d8" opacity="0.7"/>
<rect x="142.2" y="41.6" width="0.9" height="0.9" fill="#e8e0d8" opacity="0.7"/>
<rect x="142.1" y="26.1" width="0.9" height="0.9" fill="#e8e0d8" opacity="0.7"/>
<rect x="143.9" y="23.3" width="0.9" height="0.9" fill="#e8e0d8" opacity="0.7"/>
<rect x="145.9" y="34.1" width="0.9" height="0.9" fill="#e8e0d8" opacity="0.7"/>
<rect x="138.6" y="21.2" width="0.9" height="0.9" fill="#e8e0d8" opacity="0.7"/>
<rect x="139.1" y="30.8" width="0.9" height="0.9" fill="#e8e0d8" opacity="0.7"/>
<rect x="141.6" y="21.8" width="0.9" height="0.9" fill="#e8e0d8" opacity="0.7"/>
<rect x="148" y="16" width="12" height="40" fill="#7c7ea6"/>
<rect x="154.6" y="16" width="5.4" height="40" fill="#9698bc"/>
<rect x="147.5" y="15" width="13" height="1.3" fill="#a8b8dc"/>
<rect x="152.0" y="27.7" width="0.9" height="0.9" fill="#e8e0d8" opacity="0.7"/>
<rect x="149.2" y="44.5" width="0.9" height="0.9" fill="#e8e0d8" opacity="0.7"/>
<rect x="151.0" y="37.6" width="0.9" height="0.9" fill="#e8e0d8" opacity="0.7"/>
<rect x="151.6" y="25.4" width="0.9" height="0.9" fill="#e8e0d8" opacity="0.7"/>
<rect x="155.3" y="36.5" width="0.9" height="0.9" fill="#e8e0d8" opacity="0.7"/>
<rect x="154.9" y="23.9" width="0.9" height="0.9" fill="#e8e0d8" opacity="0.7"/>
<rect x="159.2" y="55.9" width="0.9" height="0.9" fill="#e8e0d8" opacity="0.7"/>
<rect x="156.5" y="53.4" width="0.9" height="0.9" fill="#e8e0d8" opacity="0.7"/>
<rect x="154.8" y="17.1" width="0.9" height="0.9" fill="#e8e0d8" opacity="0.7"/>
<rect x="155.9" y="47.1" width="0.9" height="0.9" fill="#e8e0d8" opacity="0.7"/>
<rect x="149.6" y="35.1" width="0.9" height="0.9" fill="#e8e0d8" opacity="0.7"/>
<rect x="153.0" y="29.3" width="0.9" height="0.9" fill="#e8e0d8" opacity="0.7"/>
<rect x="149.1" y="50.9" width="0.9" height="0.9" fill="#e8e0d8" opacity="0.7"/>
<rect x="151.2" y="51.3" width="0.9" height="0.9" fill="#e8e0d8" opacity="0.7"/>
<rect x="153.4" y="45.2" width="0.9" height="0.9" fill="#e8e0d8" opacity="0.7"/>
<rect x="150.9" y="38.8" width="0.9" height="0.9" fill="#e8e0d8" opacity="0.7"/>
<rect x="154.6" y="18.5" width="0.9" height="0.9" fill="#e8e0d8" opacity="0.7"/>
<rect x="159.0" y="22.7" width="0.9" height="0.9" fill="#e8e0d8" opacity="0.7"/>
<rect x="156.9" y="51.9" width="0.9" height="0.9" fill="#e8e0d8" opacity="0.7"/>
<rect x="152.0" y="21.8" width="0.9" height="0.9" fill="#e8e0d8" opacity="0.7"/>
<rect x="159.2" y="16.2" width="0.9" height="0.9" fill="#e8e0d8" opacity="0.7"/>
<rect x="156.2" y="30.5" width="0.9" height="0.9" fill="#e8e0d8" opacity="0.7"/>
<rect x="157.1" y="30.5" width="0.9" height="0.9" fill="#e8e0d8" opacity="0.7"/>
<rect x="150.0" y="39.9" width="0.9" height="0.9" fill="#e8e0d8" opacity="0.7"/>
<rect x="157.7" y="34.2" width="0.9" height="0.9" fill="#e8e0d8" opacity="0.7"/>
<rect x="152.8" y="47.3" width="0.9" height="0.9" fill="#e8e0d8" opacity="0.7"/>
<rect x="159.2" y="56.0" width="0.9" height="0.9" fill="#e8e0d8" opacity="0.7"/>
<rect x="149.7" y="46.2" width="0.9" height="0.9" fill="#e8e0d8" opacity="0.7"/>
<rect x="158.2" y="52.3" width="0.9" height="0.9" fill="#e8e0d8" opacity="0.7"/>
<rect x="155.4" y="41.6" width="0.9" height="0.9" fill="#e8e0d8" opacity="0.7"/>
<rect x="157.2" y="22.3" width="0.9" height="0.9" fill="#e8e0d8" opacity="0.7"/>
<rect x="152.9" y="17.3" width="0.9" height="0.9" fill="#e8e0d8" opacity="0.7"/>
<rect x="154.3" y="20.7" width="0.9" height="0.9" fill="#e8e0d8" opacity="0.7"/>
<rect x="152.9" y="29.4" width="0.9" height="0.9" fill="#e8e0d8" opacity="0.7"/>
<rect x="166" y="15" width="14" height="41" fill="#7c7ea6"/>
<rect x="173.7" y="15" width="6.3" height="41" fill="#9698bc"/>
<rect x="165.5" y="14" width="15" height="1.3" fill="#a8b8dc"/>
<rect x="167.8" y="25.0" width="0.9" height="0.9" fill="#e8e0d8" opacity="0.7"/>
<rect x="179.0" y="17.2" width="0.9" height="0.9" fill="#e8e0d8" opacity="0.7"/>
<rect x="177.0" y="44.6" width="0.9" height="0.9" fill="#e8e0d8" opacity="0.7"/>
<rect x="177.0" y="31.5" width="0.9" height="0.9" fill="#e8e0d8" opacity="0.7"/>
<rect x="173.0" y="19.2" width="0.9" height="0.9" fill="#e8e0d8" opacity="0.7"/>
<rect x="170.8" y="51.8" width="0.9" height="0.9" fill="#e8e0d8" opacity="0.7"/>
<rect x="178.8" y="38.2" width="0.9" height="0.9" fill="#e8e0d8" opacity="0.7"/>
<rect x="171.7" y="26.5" width="0.9" height="0.9" fill="#e8e0d8" opacity="0.7"/>
<rect x="178.4" y="34.0" width="0.9" height="0.9" fill="#e8e0d8" opacity="0.7"/>
<rect x="178.7" y="43.3" width="0.9" height="0.9" fill="#e8e0d8" opacity="0.7"/>
<rect x="177.6" y="19.8" width="0.9" height="0.9" fill="#e8e0d8" opacity="0.7"/>
<rect x="167.6" y="53.5" width="0.9" height="0.9" fill="#e8e0d8" opacity="0.7"/>
<rect x="170.6" y="36.3" width="0.9" height="0.9" fill="#e8e0d8" opacity="0.7"/>
<rect x="171.9" y="16.0" width="0.9" height="0.9" fill="#e8e0d8" opacity="0.7"/>
<rect x="178.7" y="27.1" width="0.9" height="0.9" fill="#e8e0d8" opacity="0.7"/>
<rect x="174.6" y="32.8" width="0.9" height="0.9" fill="#e8e0d8" opacity="0.7"/>
<rect x="171.3" y="28.2" width="0.9" height="0.9" fill="#e8e0d8" opacity="0.7"/>
<rect x="177.1" y="51.2" width="0.9" height="0.9" fill="#e8e0d8" opacity="0.7"/>
<rect x="178.3" y="25.0" width="0.9" height="0.9" fill="#e8e0d8" opacity="0.7"/>
<rect x="177.8" y="24.9" width="0.9" height="0.9" fill="#e8e0d8" opacity="0.7"/>
<rect x="178.2" y="54.9" width="0.9" height="0.9" fill="#e8e0d8" opacity="0.7"/>
<rect x="172.7" y="19.3" width="0.9" height="0.9" fill="#e8e0d8" opacity="0.7"/>
<rect x="178.7" y="37.3" width="0.9" height="0.9" fill="#e8e0d8" opacity="0.7"/>
<rect x="175.2" y="53.5" width="0.9" height="0.9" fill="#e8e0d8" opacity="0.7"/>
<rect x="178.3" y="56.0" width="0.9" height="0.9" fill="#e8e0d8" opacity="0.7"/>
<rect x="176.2" y="50.7" width="0.9" height="0.9" fill="#e8e0d8" opacity="0.7"/>
<rect x="171.2" y="37.4" width="0.9" height="0.9" fill="#e8e0d8" opacity="0.7"/>
<rect x="173.9" y="21.7" width="0.9" height="0.9" fill="#e8e0d8" opacity="0.7"/>
<rect x="175.1" y="32.3" width="0.9" height="0.9" fill="#e8e0d8" opacity="0.7"/>
<rect x="167.7" y="17.9" width="0.9" height="0.9" fill="#e8e0d8" opacity="0.7"/>
<rect x="173.3" y="20.3" width="0.9" height="0.9" fill="#e8e0d8" opacity="0.7"/>
<rect x="178.4" y="38.6" width="0.9" height="0.9" fill="#e8e0d8" opacity="0.7"/>
<rect x="172.3" y="27.1" width="0.9" height="0.9" fill="#e8e0d8" opacity="0.7"/>
<rect x="176.2" y="16.0" width="0.9" height="0.9" fill="#e8e0d8" opacity="0.7"/>
<rect x="168.4" y="33.1" width="0.9" height="0.9" fill="#e8e0d8" opacity="0.7"/>
<rect x="172.3" y="36.7" width="0.9" height="0.9" fill="#e8e0d8" opacity="0.7"/>
<rect x="168.0" y="43.4" width="0.9" height="0.9" fill="#e8e0d8" opacity="0.7"/>
<rect x="169.2" y="27.6" width="0.9" height="0.9" fill="#e8e0d8" opacity="0.7"/>
<rect x="172.4" y="27.9" width="0.9" height="0.9" fill="#e8e0d8" opacity="0.7"/>
<rect x="170.5" y="20.9" width="0.9" height="0.9" fill="#e8e0d8" opacity="0.7"/>
<rect x="176.9" y="46.8" width="0.9" height="0.9" fill="#e8e0d8" opacity="0.7"/>
<rect x="182" y="16" width="14" height="38" fill="#7c7ea6"/>
<rect x="189.7" y="16" width="6.3" height="38" fill="#9698bc"/>
<rect x="181.5" y="15" width="15" height="1.3" fill="#a8b8dc"/>
<rect x="194.3" y="23.7" width="0.9" height="0.9" fill="#e8e0d8" opacity="0.7"/>
<rect x="194.0" y="42.3" width="0.9" height="0.9" fill="#e8e0d8" opacity="0.7"/>
<rect x="182.8" y="28.0" width="0.9" height="0.9" fill="#e8e0d8" opacity="0.7"/>
<rect x="194.0" y="50.2" width="0.9" height="0.9" fill="#e8e0d8" opacity="0.7"/>
<rect x="182.2" y="40.1" width="0.9" height="0.9" fill="#e8e0d8" opacity="0.7"/>
<rect x="191.8" y="37.3" width="0.9" height="0.9" fill="#e8e0d8" opacity="0.7"/>
<rect x="189.5" y="25.0" width="0.9" height="0.9" fill="#e8e0d8" opacity="0.7"/>
<rect x="195.3" y="53.1" width="0.9" height="0.9" fill="#e8e0d8" opacity="0.7"/>
<rect x="191.1" y="27.6" width="0.9" height="0.9" fill="#e8e0d8" opacity="0.7"/>
<rect x="193.4" y="52.5" width="0.9" height="0.9" fill="#e8e0d8" opacity="0.7"/>
<rect x="185.8" y="32.0" width="0.9" height="0.9" fill="#e8e0d8" opacity="0.7"/>
<rect x="194.3" y="28.7" width="0.9" height="0.9" fill="#e8e0d8" opacity="0.7"/>
<rect x="195.4" y="45.6" width="0.9" height="0.9" fill="#e8e0d8" opacity="0.7"/>
<rect x="187.8" y="22.4" width="0.9" height="0.9" fill="#e8e0d8" opacity="0.7"/>
<rect x="194.1" y="20.6" width="0.9" height="0.9" fill="#e8e0d8" opacity="0.7"/>
<rect x="191.7" y="26.2" width="0.9" height="0.9" fill="#e8e0d8" opacity="0.7"/>
<rect x="192.1" y="35.1" width="0.9" height="0.9" fill="#e8e0d8" opacity="0.7"/>
<rect x="186.1" y="26.4" width="0.9" height="0.9" fill="#e8e0d8" opacity="0.7"/>
<rect x="193.3" y="35.9" width="0.9" height="0.9" fill="#e8e0d8" opacity="0.7"/>
<rect x="183.6" y="35.6" width="0.9" height="0.9" fill="#e8e0d8" opacity="0.7"/>
<rect x="195.7" y="50.0" width="0.9" height="0.9" fill="#e8e0d8" opacity="0.7"/>
<rect x="184.5" y="24.6" width="0.9" height="0.9" fill="#e8e0d8" opacity="0.7"/>
<rect x="183.9" y="41.4" width="0.9" height="0.9" fill="#e8e0d8" opacity="0.7"/>
<rect x="188.5" y="18.9" width="0.9" height="0.9" fill="#e8e0d8" opacity="0.7"/>
<rect x="194.8" y="18.8" width="0.9" height="0.9" fill="#e8e0d8" opacity="0.7"/>
<rect x="194.7" y="16.3" width="0.9" height="0.9" fill="#e8e0d8" opacity="0.7"/>
<rect x="190.2" y="36.4" width="0.9" height="0.9" fill="#e8e0d8" opacity="0.7"/>
<rect x="187.9" y="37.6" width="0.9" height="0.9" fill="#e8e0d8" opacity="0.7"/>
<rect x="184.3" y="53.6" width="0.9" height="0.9" fill="#e8e0d8" opacity="0.7"/>
<rect x="184.7" y="22.8" width="0.9" height="0.9" fill="#e8e0d8" opacity="0.7"/>
<rect x="192.3" y="17.1" width="0.9" height="0.9" fill="#e8e0d8" opacity="0.7"/>
<rect x="193.1" y="21.7" width="0.9" height="0.9" fill="#e8e0d8" opacity="0.7"/>
<rect x="194.6" y="39.6" width="0.9" height="0.9" fill="#e8e0d8" opacity="0.7"/>
<rect x="194.8" y="38.2" width="0.9" height="0.9" fill="#e8e0d8" opacity="0.7"/>
<rect x="182.0" y="49.9" width="0.9" height="0.9" fill="#e8e0d8" opacity="0.7"/>
<rect x="182.8" y="18.4" width="0.9" height="0.9" fill="#e8e0d8" opacity="0.7"/>
<rect x="192.9" y="50.6" width="0.9" height="0.9" fill="#e8e0d8" opacity="0.7"/>
<rect x="186.5" y="34.4" width="0.9" height="0.9" fill="#e8e0d8" opacity="0.7"/>
<rect x="197" y="18" width="12" height="32" fill="#7c7ea6"/>
<rect x="203.6" y="18" width="5.4" height="32" fill="#9698bc"/>
<rect x="196.5" y="17" width="13" height="1.3" fill="#a8b8dc"/>
<rect x="197.4" y="27.3" width="0.9" height="0.9" fill="#e8e0d8" opacity="0.7"/>
<rect x="206.9" y="38.3" width="0.9" height="0.9" fill="#e8e0d8" opacity="0.7"/>
<rect x="208.8" y="41.8" width="0.9" height="0.9" fill="#e8e0d8" opacity="0.7"/>
<rect x="203.4" y="37.0" width="0.9" height="0.9" fill="#e8e0d8" opacity="0.7"/>
<rect x="206.3" y="21.6" width="0.9" height="0.9" fill="#e8e0d8" opacity="0.7"/>
<rect x="202.2" y="39.4" width="0.9" height="0.9" fill="#e8e0d8" opacity="0.7"/>
<rect x="203.6" y="26.2" width="0.9" height="0.9" fill="#e8e0d8" opacity="0.7"/>
<rect x="205.6" y="41.1" width="0.9" height="0.9" fill="#e8e0d8" opacity="0.7"/>
<rect x="200.1" y="35.4" width="0.9" height="0.9" fill="#e8e0d8" opacity="0.7"/>
<rect x="207.2" y="37.3" width="0.9" height="0.9" fill="#e8e0d8" opacity="0.7"/>
<rect x="200.1" y="24.5" width="0.9" height="0.9" fill="#e8e0d8" opacity="0.7"/>
<rect x="208.6" y="19.7" width="0.9" height="0.9" fill="#e8e0d8" opacity="0.7"/>
<rect x="202.4" y="46.2" width="0.9" height="0.9" fill="#e8e0d8" opacity="0.7"/>
<rect x="200.9" y="37.5" width="0.9" height="0.9" fill="#e8e0d8" opacity="0.7"/>
<rect x="204.3" y="43.8" width="0.9" height="0.9" fill="#e8e0d8" opacity="0.7"/>
<rect x="203.0" y="41.1" width="0.9" height="0.9" fill="#e8e0d8" opacity="0.7"/>
<rect x="207.3" y="19.0" width="0.9" height="0.9" fill="#e8e0d8" opacity="0.7"/>
<rect x="198.4" y="23.7" width="0.9" height="0.9" fill="#e8e0d8" opacity="0.7"/>
<rect x="204.7" y="36.5" width="0.9" height="0.9" fill="#e8e0d8" opacity="0.7"/>
<rect x="205.7" y="37.9" width="0.9" height="0.9" fill="#e8e0d8" opacity="0.7"/>
<rect x="197.6" y="31.6" width="0.9" height="0.9" fill="#e8e0d8" opacity="0.7"/>
<rect x="205.3" y="44.2" width="0.9" height="0.9" fill="#e8e0d8" opacity="0.7"/>
<rect x="205.9" y="43.0" width="0.9" height="0.9" fill="#e8e0d8" opacity="0.7"/>
<rect x="206.2" y="33.9" width="0.9" height="0.9" fill="#e8e0d8" opacity="0.7"/>
<rect x="204.8" y="34.3" width="0.9" height="0.9" fill="#e8e0d8" opacity="0.7"/>
<rect x="201.5" y="25.9" width="0.9" height="0.9" fill="#e8e0d8" opacity="0.7"/>
<rect x="203.0" y="39.1" width="0.9" height="0.9" fill="#e8e0d8" opacity="0.7"/>
<rect x="210" y="20" width="10" height="24" fill="#7c7ea6"/>
<rect x="215.5" y="20" width="4.5" height="24" fill="#9698bc"/>
<rect x="209.5" y="19" width="11" height="1.3" fill="#a8b8dc"/>
<rect x="216.0" y="30.9" width="0.9" height="0.9" fill="#e8e0d8" opacity="0.7"/>
<rect x="213.2" y="31.2" width="0.9" height="0.9" fill="#e8e0d8" opacity="0.7"/>
<rect x="217.0" y="36.9" width="0.9" height="0.9" fill="#e8e0d8" opacity="0.7"/>
<rect x="219.6" y="23.1" width="0.9" height="0.9" fill="#e8e0d8" opacity="0.7"/>
<rect x="217.6" y="34.4" width="0.9" height="0.9" fill="#e8e0d8" opacity="0.7"/>
<rect x="211.3" y="37.9" width="0.9" height="0.9" fill="#e8e0d8" opacity="0.7"/>
<rect x="215.2" y="43.7" width="0.9" height="0.9" fill="#e8e0d8" opacity="0.7"/>
<rect x="210.0" y="29.8" width="0.9" height="0.9" fill="#e8e0d8" opacity="0.7"/>
<rect x="215.3" y="22.2" width="0.9" height="0.9" fill="#e8e0d8" opacity="0.7"/>
<rect x="215.6" y="31.3" width="0.9" height="0.9" fill="#e8e0d8" opacity="0.7"/>
<rect x="219.4" y="43.3" width="0.9" height="0.9" fill="#e8e0d8" opacity="0.7"/>
<rect x="216.8" y="37.2" width="0.9" height="0.9" fill="#e8e0d8" opacity="0.7"/>
<rect x="219.8" y="34.7" width="0.9" height="0.9" fill="#e8e0d8" opacity="0.7"/>
<rect x="213.0" y="22.9" width="0.9" height="0.9" fill="#e8e0d8" opacity="0.7"/>
<rect x="218.6" y="30.0" width="0.9" height="0.9" fill="#e8e0d8" opacity="0.7"/>
<rect x="210.9" y="25.5" width="0.9" height="0.9" fill="#e8e0d8" opacity="0.7"/>
<rect x="213.1" y="42.7" width="0.9" height="0.9" fill="#e8e0d8" opacity="0.7"/>
<path d="M24 52 L46 50 L48 98 L30 95 L22 80Z" fill="#565a66"/>
<path d="M106 82 L150 76 L168 66 L200 50 L220 44 L220 56 L180 86 L150 108 L106 110Z" fill="#434a44"/>
<path d="M46 96 L112 98 L128 110 L46 110Z" fill="#505058"/>
<rect x="0" y="50" width="24" height="30" fill="#7e7aa2"/>
<rect x="12.0" y="50" width="12.0" height="30" fill="#9290b4"/>
<rect x="-0.5" y="48.5" width="25" height="2" fill="#7aa4d4"/>
<rect x="22.2" y="56.5" width="0.9" height="0.9" fill="#f0e4e0" opacity="0.7"/>
<rect x="3.8" y="67.6" width="0.9" height="0.9" fill="#f0e4e0" opacity="0.7"/>
<rect x="23.9" y="72.1" width="0.9" height="0.9" fill="#f0e4e0" opacity="0.7"/>
<rect x="13.6" y="77.4" width="0.9" height="0.9" fill="#f0e4e0" opacity="0.7"/>
<rect x="21.2" y="77.7" width="0.9" height="0.9" fill="#f0e4e0" opacity="0.7"/>
<rect x="4.3" y="75.8" width="0.9" height="0.9" fill="#f0e4e0" opacity="0.7"/>
<rect x="22.5" y="56.4" width="0.9" height="0.9" fill="#f0e4e0" opacity="0.7"/>
<rect x="9.1" y="51.5" width="0.9" height="0.9" fill="#f0e4e0" opacity="0.7"/>
<rect x="10.0" y="57.4" width="0.9" height="0.9" fill="#f0e4e0" opacity="0.7"/>
<rect x="19.0" y="74.1" width="0.9" height="0.9" fill="#f0e4e0" opacity="0.7"/>
<rect x="11.5" y="62.0" width="0.9" height="0.9" fill="#f0e4e0" opacity="0.7"/>
<rect x="14.3" y="72.8" width="0.9" height="0.9" fill="#f0e4e0" opacity="0.7"/>
<rect x="11.3" y="64.7" width="0.9" height="0.9" fill="#f0e4e0" opacity="0.7"/>
<rect x="15.0" y="55.4" width="0.9" height="0.9" fill="#f0e4e0" opacity="0.7"/>
<rect x="11.7" y="66.2" width="0.9" height="0.9" fill="#f0e4e0" opacity="0.7"/>
<rect x="10.1" y="51.4" width="0.9" height="0.9" fill="#f0e4e0" opacity="0.7"/>
<rect x="6.6" y="78.5" width="0.9" height="0.9" fill="#f0e4e0" opacity="0.7"/>
<rect x="14.9" y="65.6" width="0.9" height="0.9" fill="#f0e4e0" opacity="0.7"/>
<rect x="17.8" y="65.4" width="0.9" height="0.9" fill="#f0e4e0" opacity="0.7"/>
<rect x="13.6" y="69.5" width="0.9" height="0.9" fill="#f0e4e0" opacity="0.7"/>
<rect x="5.2" y="53.1" width="0.9" height="0.9" fill="#f0e4e0" opacity="0.7"/>
<rect x="1.4" y="71.8" width="0.9" height="0.9" fill="#f0e4e0" opacity="0.7"/>
<rect x="18.6" y="54.1" width="0.9" height="0.9" fill="#f0e4e0" opacity="0.7"/>
<rect x="5.8" y="75.2" width="0.9" height="0.9" fill="#f0e4e0" opacity="0.7"/>
<rect x="2.9" y="79.9" width="0.9" height="0.9" fill="#f0e4e0" opacity="0.7"/>
<rect x="20.1" y="63.5" width="0.9" height="0.9" fill="#f0e4e0" opacity="0.7"/>
<rect x="20.5" y="61.4" width="0.9" height="0.9" fill="#f0e4e0" opacity="0.7"/>
<rect x="6.2" y="76.4" width="0.9" height="0.9" fill="#f0e4e0" opacity="0.7"/>
<rect x="16.1" y="59.1" width="0.9" height="0.9" fill="#f0e4e0" opacity="0.7"/>
<rect x="14.6" y="64.7" width="0.9" height="0.9" fill="#f0e4e0" opacity="0.7"/>
<rect x="4.5" y="65.4" width="0.9" height="0.9" fill="#f0e4e0" opacity="0.7"/>
<rect x="3.1" y="56.3" width="0.9" height="0.9" fill="#f0e4e0" opacity="0.7"/>
<rect x="9.9" y="64.4" width="0.9" height="0.9" fill="#f0e4e0" opacity="0.7"/>
<rect x="16.7" y="65.5" width="0.9" height="0.9" fill="#f0e4e0" opacity="0.7"/>
<rect x="13.2" y="59.4" width="0.9" height="0.9" fill="#f0e4e0" opacity="0.7"/>
<rect x="10.8" y="61.3" width="0.9" height="0.9" fill="#f0e4e0" opacity="0.7"/>
<rect x="21.1" y="75.0" width="0.9" height="0.9" fill="#f0e4e0" opacity="0.7"/>
<rect x="12.8" y="63.5" width="0.9" height="0.9" fill="#f0e4e0" opacity="0.7"/>
<rect x="3.3" y="65.5" width="0.9" height="0.9" fill="#f0e4e0" opacity="0.7"/>
<rect x="8.5" y="53.1" width="0.9" height="0.9" fill="#f0e4e0" opacity="0.7"/>
<rect x="8.9" y="68.3" width="0.9" height="0.9" fill="#f0e4e0" opacity="0.7"/>
<rect x="3.4" y="75.4" width="0.9" height="0.9" fill="#f0e4e0" opacity="0.7"/>
<rect x="17.9" y="64.5" width="0.9" height="0.9" fill="#f0e4e0" opacity="0.7"/>
<rect x="0.3" y="72.8" width="0.9" height="0.9" fill="#f0e4e0" opacity="0.7"/>
<rect x="17.8" y="69.8" width="0.9" height="0.9" fill="#f0e4e0" opacity="0.7"/>
<rect x="1.6" y="75.6" width="0.9" height="0.9" fill="#f0e4e0" opacity="0.7"/>
<rect x="13.4" y="60.6" width="0.9" height="0.9" fill="#f0e4e0" opacity="0.7"/>
<rect x="2.9" y="73.2" width="0.9" height="0.9" fill="#f0e4e0" opacity="0.7"/>
<rect x="9.0" y="73.5" width="0.9" height="0.9" fill="#f0e4e0" opacity="0.7"/>
<rect x="6.2" y="74.0" width="0.9" height="0.9" fill="#f0e4e0" opacity="0.7"/>
<rect x="2.9" y="64.8" width="0.9" height="0.9" fill="#f0e4e0" opacity="0.7"/>
<rect x="11.8" y="77.9" width="0.9" height="0.9" fill="#f0e4e0" opacity="0.7"/>
<rect x="6.8" y="71.1" width="0.9" height="0.9" fill="#f0e4e0" opacity="0.7"/>
<rect x="5.3" y="77.8" width="0.9" height="0.9" fill="#f0e4e0" opacity="0.7"/>
<rect x="4.8" y="73.0" width="0.9" height="0.9" fill="#f0e4e0" opacity="0.7"/>
<rect x="8.4" y="71.4" width="0.9" height="0.9" fill="#f0e4e0" opacity="0.7"/>
<rect x="12.5" y="72.3" width="0.9" height="0.9" fill="#f0e4e0" opacity="0.7"/>
<rect x="21.8" y="74.1" width="0.9" height="0.9" fill="#f0e4e0" opacity="0.7"/>
<rect x="11.5" y="57.7" width="0.9" height="0.9" fill="#f0e4e0" opacity="0.7"/>
<rect x="20.5" y="59.3" width="0.9" height="0.9" fill="#f0e4e0" opacity="0.7"/>
<rect x="48" y="57" width="28" height="41" fill="#9a8aac"/>
<rect x="62.0" y="57" width="14.0" height="41" fill="#b0a0c0"/>
<rect x="47.5" y="55.5" width="29" height="2" fill="#7aa4d4"/>
<rect x="73.6" y="94.0" width="0.9" height="0.9" fill="#f0e4e0" opacity="0.7"/>
<rect x="51.4" y="94.3" width="0.9" height="0.9" fill="#f0e4e0" opacity="0.7"/>
<rect x="73.5" y="68.2" width="0.9" height="0.9" fill="#f0e4e0" opacity="0.7"/>
<rect x="58.6" y="91.7" width="0.9" height="0.9" fill="#f0e4e0" opacity="0.7"/>
<rect x="56.4" y="86.5" width="0.9" height="0.9" fill="#f0e4e0" opacity="0.7"/>
<rect x="72.8" y="60.0" width="0.9" height="0.9" fill="#f0e4e0" opacity="0.7"/>
<rect x="49.0" y="70.3" width="0.9" height="0.9" fill="#f0e4e0" opacity="0.7"/>
<rect x="58.5" y="69.2" width="0.9" height="0.9" fill="#f0e4e0" opacity="0.7"/>
<rect x="70.8" y="93.4" width="0.9" height="0.9" fill="#f0e4e0" opacity="0.7"/>
<rect x="66.0" y="72.8" width="0.9" height="0.9" fill="#f0e4e0" opacity="0.7"/>
<rect x="57.6" y="93.8" width="0.9" height="0.9" fill="#f0e4e0" opacity="0.7"/>
<rect x="48.9" y="86.0" width="0.9" height="0.9" fill="#f0e4e0" opacity="0.7"/>
<rect x="54.1" y="60.1" width="0.9" height="0.9" fill="#f0e4e0" opacity="0.7"/>
<rect x="49.3" y="79.3" width="0.9" height="0.9" fill="#f0e4e0" opacity="0.7"/>
<rect x="65.2" y="59.6" width="0.9" height="0.9" fill="#f0e4e0" opacity="0.7"/>
<rect x="49.9" y="76.0" width="0.9" height="0.9" fill="#f0e4e0" opacity="0.7"/>
<rect x="60.6" y="96.6" width="0.9" height="0.9" fill="#f0e4e0" opacity="0.7"/>
<rect x="58.8" y="90.0" width="0.9" height="0.9" fill="#f0e4e0" opacity="0.7"/>
<rect x="67.1" y="68.2" width="0.9" height="0.9" fill="#f0e4e0" opacity="0.7"/>
<rect x="61.9" y="76.4" width="0.9" height="0.9" fill="#f0e4e0" opacity="0.7"/>
<rect x="48.6" y="81.8" width="0.9" height="0.9" fill="#f0e4e0" opacity="0.7"/>
<rect x="55.6" y="67.6" width="0.9" height="0.9" fill="#f0e4e0" opacity="0.7"/>
<rect x="54.2" y="78.3" width="0.9" height="0.9" fill="#f0e4e0" opacity="0.7"/>
<rect x="73.9" y="97.2" width="0.9" height="0.9" fill="#f0e4e0" opacity="0.7"/>
<rect x="48.1" y="79.4" width="0.9" height="0.9" fill="#f0e4e0" opacity="0.7"/>
<rect x="71.8" y="88.4" width="0.9" height="0.9" fill="#f0e4e0" opacity="0.7"/>
<rect x="50.2" y="90.8" width="0.9" height="0.9" fill="#f0e4e0" opacity="0.7"/>
<rect x="72.8" y="85.3" width="0.9" height="0.9" fill="#f0e4e0" opacity="0.7"/>
<rect x="70.3" y="67.8" width="0.9" height="0.9" fill="#f0e4e0" opacity="0.7"/>
<rect x="50.9" y="57.8" width="0.9" height="0.9" fill="#f0e4e0" opacity="0.7"/>
<rect x="70.6" y="65.5" width="0.9" height="0.9" fill="#f0e4e0" opacity="0.7"/>
<rect x="59.1" y="63.4" width="0.9" height="0.9" fill="#f0e4e0" opacity="0.7"/>
<rect x="53.4" y="63.6" width="0.9" height="0.9" fill="#f0e4e0" opacity="0.7"/>
<rect x="57.3" y="85.3" width="0.9" height="0.9" fill="#f0e4e0" opacity="0.7"/>
<rect x="70.5" y="69.0" width="0.9" height="0.9" fill="#f0e4e0" opacity="0.7"/>
<rect x="59.6" y="72.0" width="0.9" height="0.9" fill="#f0e4e0" opacity="0.7"/>
<rect x="66.7" y="77.4" width="0.9" height="0.9" fill="#f0e4e0" opacity="0.7"/>
<rect x="66.1" y="71.9" width="0.9" height="0.9" fill="#f0e4e0" opacity="0.7"/>
<rect x="67.8" y="94.6" width="0.9" height="0.9" fill="#f0e4e0" opacity="0.7"/>
<rect x="68.7" y="93.0" width="0.9" height="0.9" fill="#f0e4e0" opacity="0.7"/>
<rect x="75.7" y="90.5" width="0.9" height="0.9" fill="#f0e4e0" opacity="0.7"/>
<rect x="72.8" y="69.7" width="0.9" height="0.9" fill="#f0e4e0" opacity="0.7"/>
<rect x="71.8" y="78.0" width="0.9" height="0.9" fill="#f0e4e0" opacity="0.7"/>
<rect x="67.0" y="58.7" width="0.9" height="0.9" fill="#f0e4e0" opacity="0.7"/>
<rect x="65.4" y="73.9" width="0.9" height="0.9" fill="#f0e4e0" opacity="0.7"/>
<rect x="61.5" y="71.1" width="0.9" height="0.9" fill="#f0e4e0" opacity="0.7"/>
<rect x="59.1" y="87.3" width="0.9" height="0.9" fill="#f0e4e0" opacity="0.7"/>
<rect x="67.4" y="67.4" width="0.9" height="0.9" fill="#f0e4e0" opacity="0.7"/>
<rect x="65.8" y="72.1" width="0.9" height="0.9" fill="#f0e4e0" opacity="0.7"/>
<rect x="67.1" y="64.5" width="0.9" height="0.9" fill="#f0e4e0" opacity="0.7"/>
<rect x="72.0" y="65.4" width="0.9" height="0.9" fill="#f0e4e0" opacity="0.7"/>
<rect x="63.8" y="62.3" width="0.9" height="0.9" fill="#f0e4e0" opacity="0.7"/>
<rect x="75.5" y="83.3" width="0.9" height="0.9" fill="#f0e4e0" opacity="0.7"/>
<rect x="51.5" y="87.4" width="0.9" height="0.9" fill="#f0e4e0" opacity="0.7"/>
<rect x="55.5" y="63.6" width="0.9" height="0.9" fill="#f0e4e0" opacity="0.7"/>
<rect x="53.6" y="82.5" width="0.9" height="0.9" fill="#f0e4e0" opacity="0.7"/>
<rect x="56.2" y="83.7" width="0.9" height="0.9" fill="#f0e4e0" opacity="0.7"/>
<rect x="75.3" y="76.3" width="0.9" height="0.9" fill="#f0e4e0" opacity="0.7"/>
<rect x="67.4" y="89.4" width="0.9" height="0.9" fill="#f0e4e0" opacity="0.7"/>
<rect x="74.0" y="68.0" width="0.9" height="0.9" fill="#f0e4e0" opacity="0.7"/>
<rect x="55.6" y="67.3" width="0.9" height="0.9" fill="#f0e4e0" opacity="0.7"/>
<rect x="66.6" y="72.9" width="0.9" height="0.9" fill="#f0e4e0" opacity="0.7"/>
<rect x="67.0" y="62.7" width="0.9" height="0.9" fill="#f0e4e0" opacity="0.7"/>
<rect x="52.4" y="97.9" width="0.9" height="0.9" fill="#f0e4e0" opacity="0.7"/>
<rect x="72.4" y="64.9" width="0.9" height="0.9" fill="#f0e4e0" opacity="0.7"/>
<rect x="58.0" y="79.1" width="0.9" height="0.9" fill="#f0e4e0" opacity="0.7"/>
<rect x="70.4" y="73.6" width="0.9" height="0.9" fill="#f0e4e0" opacity="0.7"/>
<rect x="73.3" y="91.1" width="0.9" height="0.9" fill="#f0e4e0" opacity="0.7"/>
<rect x="72.0" y="64.0" width="0.9" height="0.9" fill="#f0e4e0" opacity="0.7"/>
<rect x="49.9" y="75.0" width="0.9" height="0.9" fill="#f0e4e0" opacity="0.7"/>
<rect x="72.4" y="83.6" width="0.9" height="0.9" fill="#f0e4e0" opacity="0.7"/>
<rect x="54.3" y="86.6" width="0.9" height="0.9" fill="#f0e4e0" opacity="0.7"/>
<rect x="59.4" y="62.8" width="0.9" height="0.9" fill="#f0e4e0" opacity="0.7"/>
<rect x="64.1" y="84.7" width="0.9" height="0.9" fill="#f0e4e0" opacity="0.7"/>
<rect x="54.1" y="68.6" width="0.9" height="0.9" fill="#f0e4e0" opacity="0.7"/>
<rect x="72.3" y="75.1" width="0.9" height="0.9" fill="#f0e4e0" opacity="0.7"/>
<rect x="71.3" y="79.8" width="0.9" height="0.9" fill="#f0e4e0" opacity="0.7"/>
<rect x="73.1" y="93.1" width="0.9" height="0.9" fill="#f0e4e0" opacity="0.7"/>
<rect x="60.1" y="63.2" width="0.9" height="0.9" fill="#f0e4e0" opacity="0.7"/>
<rect x="72.8" y="68.1" width="0.9" height="0.9" fill="#f0e4e0" opacity="0.7"/>
<rect x="63.9" y="68.2" width="0.9" height="0.9" fill="#f0e4e0" opacity="0.7"/>
<rect x="59.2" y="70.2" width="0.9" height="0.9" fill="#f0e4e0" opacity="0.7"/>
<rect x="50.3" y="65.2" width="0.9" height="0.9" fill="#f0e4e0" opacity="0.7"/>
<rect x="63.4" y="79.9" width="0.9" height="0.9" fill="#f0e4e0" opacity="0.7"/>
<rect x="52.2" y="57.3" width="0.9" height="0.9" fill="#f0e4e0" opacity="0.7"/>
<rect x="69.3" y="84.5" width="0.9" height="0.9" fill="#f0e4e0" opacity="0.7"/>
<rect x="48.1" y="70.8" width="0.9" height="0.9" fill="#f0e4e0" opacity="0.7"/>
<rect x="51.9" y="89.4" width="0.9" height="0.9" fill="#f0e4e0" opacity="0.7"/>
<rect x="75.8" y="73.8" width="0.9" height="0.9" fill="#f0e4e0" opacity="0.7"/>
<rect x="48.9" y="71.4" width="0.9" height="0.9" fill="#f0e4e0" opacity="0.7"/>
<rect x="63.7" y="79.9" width="0.9" height="0.9" fill="#f0e4e0" opacity="0.7"/>
<rect x="54.0" y="82.3" width="0.9" height="0.9" fill="#f0e4e0" opacity="0.7"/>
<rect x="71.2" y="67.3" width="0.9" height="0.9" fill="#f0e4e0" opacity="0.7"/>
<rect x="53.3" y="68.9" width="0.9" height="0.9" fill="#f0e4e0" opacity="0.7"/>
<rect x="55.0" y="90.0" width="0.9" height="0.9" fill="#f0e4e0" opacity="0.7"/>
<rect x="76" y="60" width="32" height="40" fill="#9e8eae"/>
<rect x="92.0" y="60" width="16.0" height="40" fill="#b6a6c2"/>
<rect x="75.5" y="58.5" width="33" height="2" fill="#7aa4d4"/>
<rect x="94.3" y="97.6" width="0.9" height="0.9" fill="#f0e4e0" opacity="0.7"/>
<rect x="77.5" y="94.3" width="0.9" height="0.9" fill="#f0e4e0" opacity="0.7"/>
<rect x="106.2" y="81.6" width="0.9" height="0.9" fill="#f0e4e0" opacity="0.7"/>
<rect x="97.6" y="70.8" width="0.9" height="0.9" fill="#f0e4e0" opacity="0.7"/>
<rect x="76.8" y="82.2" width="0.9" height="0.9" fill="#f0e4e0" opacity="0.7"/>
<rect x="78.0" y="78.6" width="0.9" height="0.9" fill="#f0e4e0" opacity="0.7"/>
<rect x="104.4" y="62.5" width="0.9" height="0.9" fill="#f0e4e0" opacity="0.7"/>
<rect x="87.7" y="90.7" width="0.9" height="0.9" fill="#f0e4e0" opacity="0.7"/>
<rect x="84.5" y="69.8" width="0.9" height="0.9" fill="#f0e4e0" opacity="0.7"/>
<rect x="105.6" y="79.8" width="0.9" height="0.9" fill="#f0e4e0" opacity="0.7"/>
<rect x="85.9" y="81.3" width="0.9" height="0.9" fill="#f0e4e0" opacity="0.7"/>
<rect x="97.3" y="92.1" width="0.9" height="0.9" fill="#f0e4e0" opacity="0.7"/>
<rect x="100.6" y="97.4" width="0.9" height="0.9" fill="#f0e4e0" opacity="0.7"/>
<rect x="91.4" y="93.6" width="0.9" height="0.9" fill="#f0e4e0" opacity="0.7"/>
<rect x="89.1" y="96.0" width="0.9" height="0.9" fill="#f0e4e0" opacity="0.7"/>
<rect x="96.0" y="60.4" width="0.9" height="0.9" fill="#f0e4e0" opacity="0.7"/>
<rect x="80.5" y="72.9" width="0.9" height="0.9" fill="#f0e4e0" opacity="0.7"/>
<rect x="99.2" y="80.2" width="0.9" height="0.9" fill="#f0e4e0" opacity="0.7"/>
<rect x="84.9" y="99.7" width="0.9" height="0.9" fill="#f0e4e0" opacity="0.7"/>
<rect x="96.1" y="78.0" width="0.9" height="0.9" fill="#f0e4e0" opacity="0.7"/>
<rect x="86.0" y="62.7" width="0.9" height="0.9" fill="#f0e4e0" opacity="0.7"/>
<rect x="96.9" y="83.8" width="0.9" height="0.9" fill="#f0e4e0" opacity="0.7"/>
<rect x="84.5" y="68.5" width="0.9" height="0.9" fill="#f0e4e0" opacity="0.7"/>
<rect x="81.8" y="61.9" width="0.9" height="0.9" fill="#f0e4e0" opacity="0.7"/>
<rect x="80.2" y="72.2" width="0.9" height="0.9" fill="#f0e4e0" opacity="0.7"/>
<rect x="82.6" y="73.9" width="0.9" height="0.9" fill="#f0e4e0" opacity="0.7"/>
<rect x="81.0" y="74.9" width="0.9" height="0.9" fill="#f0e4e0" opacity="0.7"/>
<rect x="81.8" y="60.9" width="0.9" height="0.9" fill="#f0e4e0" opacity="0.7"/>
<rect x="88.8" y="62.1" width="0.9" height="0.9" fill="#f0e4e0" opacity="0.7"/>
<rect x="79.0" y="98.0" width="0.9" height="0.9" fill="#f0e4e0" opacity="0.7"/>
<rect x="102.9" y="90.5" width="0.9" height="0.9" fill="#f0e4e0" opacity="0.7"/>
<rect x="76.7" y="67.0" width="0.9" height="0.9" fill="#f0e4e0" opacity="0.7"/>
<rect x="78.1" y="83.6" width="0.9" height="0.9" fill="#f0e4e0" opacity="0.7"/>
<rect x="94.5" y="72.9" width="0.9" height="0.9" fill="#f0e4e0" opacity="0.7"/>
<rect x="91.1" y="97.5" width="0.9" height="0.9" fill="#f0e4e0" opacity="0.7"/>
<rect x="92.0" y="91.2" width="0.9" height="0.9" fill="#f0e4e0" opacity="0.7"/>
<rect x="104.4" y="92.5" width="0.9" height="0.9" fill="#f0e4e0" opacity="0.7"/>
<rect x="78.2" y="75.6" width="0.9" height="0.9" fill="#f0e4e0" opacity="0.7"/>
<rect x="105.5" y="95.3" width="0.9" height="0.9" fill="#f0e4e0" opacity="0.7"/>
<rect x="100.9" y="81.0" width="0.9" height="0.9" fill="#f0e4e0" opacity="0.7"/>
<rect x="76.3" y="89.2" width="0.9" height="0.9" fill="#f0e4e0" opacity="0.7"/>
<rect x="97.2" y="96.4" width="0.9" height="0.9" fill="#f0e4e0" opacity="0.7"/>
<rect x="77.8" y="84.7" width="0.9" height="0.9" fill="#f0e4e0" opacity="0.7"/>
<rect x="87.0" y="77.6" width="0.9" height="0.9" fill="#f0e4e0" opacity="0.7"/>
<rect x="98.9" y="77.0" width="0.9" height="0.9" fill="#f0e4e0" opacity="0.7"/>
<rect x="107.0" y="97.0" width="0.9" height="0.9" fill="#f0e4e0" opacity="0.7"/>
<rect x="79.9" y="89.5" width="0.9" height="0.9" fill="#f0e4e0" opacity="0.7"/>
<rect x="99.8" y="77.4" width="0.9" height="0.9" fill="#f0e4e0" opacity="0.7"/>
<rect x="91.0" y="93.5" width="0.9" height="0.9" fill="#f0e4e0" opacity="0.7"/>
<rect x="92.0" y="75.0" width="0.9" height="0.9" fill="#f0e4e0" opacity="0.7"/>
<rect x="93.3" y="61.7" width="0.9" height="0.9" fill="#f0e4e0" opacity="0.7"/>
<rect x="105.4" y="81.1" width="0.9" height="0.9" fill="#f0e4e0" opacity="0.7"/>
<rect x="90.5" y="71.4" width="0.9" height="0.9" fill="#f0e4e0" opacity="0.7"/>
<rect x="77.5" y="62.2" width="0.9" height="0.9" fill="#f0e4e0" opacity="0.7"/>
<rect x="86.4" y="81.5" width="0.9" height="0.9" fill="#f0e4e0" opacity="0.7"/>
<rect x="86.5" y="70.2" width="0.9" height="0.9" fill="#f0e4e0" opacity="0.7"/>
<rect x="95.9" y="67.5" width="0.9" height="0.9" fill="#f0e4e0" opacity="0.7"/>
<rect x="91.0" y="82.1" width="0.9" height="0.9" fill="#f0e4e0" opacity="0.7"/>
<rect x="77.7" y="98.7" width="0.9" height="0.9" fill="#f0e4e0" opacity="0.7"/>
<rect x="100.1" y="95.9" width="0.9" height="0.9" fill="#f0e4e0" opacity="0.7"/>
<rect x="79.6" y="67.5" width="0.9" height="0.9" fill="#f0e4e0" opacity="0.7"/>
<rect x="105.6" y="91.6" width="0.9" height="0.9" fill="#f0e4e0" opacity="0.7"/>
<rect x="80.6" y="64.6" width="0.9" height="0.9" fill="#f0e4e0" opacity="0.7"/>
<rect x="79.3" y="70.1" width="0.9" height="0.9" fill="#f0e4e0" opacity="0.7"/>
<rect x="84.4" y="67.4" width="0.9" height="0.9" fill="#f0e4e0" opacity="0.7"/>
<rect x="77.2" y="73.7" width="0.9" height="0.9" fill="#f0e4e0" opacity="0.7"/>
<rect x="92.6" y="74.0" width="0.9" height="0.9" fill="#f0e4e0" opacity="0.7"/>
<rect x="82.6" y="60.6" width="0.9" height="0.9" fill="#f0e4e0" opacity="0.7"/>
<rect x="89.7" y="79.6" width="0.9" height="0.9" fill="#f0e4e0" opacity="0.7"/>
<rect x="106.8" y="69.5" width="0.9" height="0.9" fill="#f0e4e0" opacity="0.7"/>
<rect x="79.4" y="77.6" width="0.9" height="0.9" fill="#f0e4e0" opacity="0.7"/>
<rect x="100.2" y="95.1" width="0.9" height="0.9" fill="#f0e4e0" opacity="0.7"/>
<rect x="78.3" y="79.9" width="0.9" height="0.9" fill="#f0e4e0" opacity="0.7"/>
<rect x="77.8" y="94.8" width="0.9" height="0.9" fill="#f0e4e0" opacity="0.7"/>
<rect x="107.1" y="62.6" width="0.9" height="0.9" fill="#f0e4e0" opacity="0.7"/>
<rect x="106.1" y="92.5" width="0.9" height="0.9" fill="#f0e4e0" opacity="0.7"/>
<rect x="81.7" y="73.3" width="0.9" height="0.9" fill="#f0e4e0" opacity="0.7"/>
<rect x="105.7" y="98.2" width="0.9" height="0.9" fill="#f0e4e0" opacity="0.7"/>
<rect x="83.0" y="71.5" width="0.9" height="0.9" fill="#f0e4e0" opacity="0.7"/>
<rect x="89.3" y="84.6" width="0.9" height="0.9" fill="#f0e4e0" opacity="0.7"/>
<rect x="77.0" y="87.3" width="0.9" height="0.9" fill="#f0e4e0" opacity="0.7"/>
<rect x="90.9" y="79.6" width="0.9" height="0.9" fill="#f0e4e0" opacity="0.7"/>
<rect x="78.8" y="86.0" width="0.9" height="0.9" fill="#f0e4e0" opacity="0.7"/>
<rect x="93.0" y="72.7" width="0.9" height="0.9" fill="#f0e4e0" opacity="0.7"/>
<rect x="106.6" y="98.8" width="0.9" height="0.9" fill="#f0e4e0" opacity="0.7"/>
<rect x="93.9" y="99.8" width="0.9" height="0.9" fill="#f0e4e0" opacity="0.7"/>
<rect x="88.1" y="92.7" width="0.9" height="0.9" fill="#f0e4e0" opacity="0.7"/>
<rect x="98.4" y="93.8" width="0.9" height="0.9" fill="#f0e4e0" opacity="0.7"/>
<rect x="106.3" y="86.3" width="0.9" height="0.9" fill="#f0e4e0" opacity="0.7"/>
<rect x="82.7" y="68.4" width="0.9" height="0.9" fill="#f0e4e0" opacity="0.7"/>
<rect x="100.5" y="66.9" width="0.9" height="0.9" fill="#f0e4e0" opacity="0.7"/>
<rect x="94.6" y="61.7" width="0.9" height="0.9" fill="#f0e4e0" opacity="0.7"/>
<rect x="84.9" y="70.3" width="0.9" height="0.9" fill="#f0e4e0" opacity="0.7"/>
<rect x="87.0" y="84.9" width="0.9" height="0.9" fill="#f0e4e0" opacity="0.7"/>
<rect x="85.8" y="60.3" width="0.9" height="0.9" fill="#f0e4e0" opacity="0.7"/>
<rect x="78.2" y="68.2" width="0.9" height="0.9" fill="#f0e4e0" opacity="0.7"/>
<rect x="99.0" y="94.8" width="0.9" height="0.9" fill="#f0e4e0" opacity="0.7"/>
<rect x="100.6" y="68.0" width="0.9" height="0.9" fill="#f0e4e0" opacity="0.7"/>
<rect x="78.3" y="70.6" width="0.9" height="0.9" fill="#f0e4e0" opacity="0.7"/>
<rect x="88.0" y="84.5" width="0.9" height="0.9" fill="#f0e4e0" opacity="0.7"/>
<rect x="84.9" y="65.4" width="0.9" height="0.9" fill="#f0e4e0" opacity="0.7"/>
<rect x="80.0" y="63.8" width="0.9" height="0.9" fill="#f0e4e0" opacity="0.7"/>
<rect x="92.4" y="76.7" width="0.9" height="0.9" fill="#f0e4e0" opacity="0.7"/>
<rect x="91.8" y="64.7" width="0.9" height="0.9" fill="#f0e4e0" opacity="0.7"/>
<rect x="79.9" y="95.1" width="0.9" height="0.9" fill="#f0e4e0" opacity="0.7"/>
<rect x="106.5" y="63.1" width="0.9" height="0.9" fill="#f0e4e0" opacity="0.7"/>
<rect x="108" y="50" width="36" height="34" fill="#8682aa"/>
<rect x="126.0" y="50" width="18.0" height="34" fill="#9c98bc"/>
<rect x="107.5" y="48.5" width="37" height="2" fill="#7aa4d4"/>
<rect x="131.3" y="57.7" width="0.9" height="0.9" fill="#f0e4e0" opacity="0.7"/>
<rect x="125.2" y="56.8" width="0.9" height="0.9" fill="#f0e4e0" opacity="0.7"/>
<rect x="122.9" y="57.5" width="0.9" height="0.9" fill="#f0e4e0" opacity="0.7"/>
<rect x="131.0" y="62.5" width="0.9" height="0.9" fill="#f0e4e0" opacity="0.7"/>
<rect x="120.0" y="69.9" width="0.9" height="0.9" fill="#f0e4e0" opacity="0.7"/>
<rect x="131.7" y="59.1" width="0.9" height="0.9" fill="#f0e4e0" opacity="0.7"/>
<rect x="131.8" y="50.4" width="0.9" height="0.9" fill="#f0e4e0" opacity="0.7"/>
<rect x="130.0" y="50.5" width="0.9" height="0.9" fill="#f0e4e0" opacity="0.7"/>
<rect x="121.5" y="70.2" width="0.9" height="0.9" fill="#f0e4e0" opacity="0.7"/>
<rect x="139.2" y="63.2" width="0.9" height="0.9" fill="#f0e4e0" opacity="0.7"/>
<rect x="118.0" y="53.5" width="0.9" height="0.9" fill="#f0e4e0" opacity="0.7"/>
<rect x="139.7" y="76.1" width="0.9" height="0.9" fill="#f0e4e0" opacity="0.7"/>
<rect x="111.8" y="72.4" width="0.9" height="0.9" fill="#f0e4e0" opacity="0.7"/>
<rect x="124.3" y="57.1" width="0.9" height="0.9" fill="#f0e4e0" opacity="0.7"/>
<rect x="136.4" y="50.5" width="0.9" height="0.9" fill="#f0e4e0" opacity="0.7"/>
<rect x="109.1" y="70.1" width="0.9" height="0.9" fill="#f0e4e0" opacity="0.7"/>
<rect x="133.1" y="83.7" width="0.9" height="0.9" fill="#f0e4e0" opacity="0.7"/>
<rect x="137.4" y="79.7" width="0.9" height="0.9" fill="#f0e4e0" opacity="0.7"/>
<rect x="132.0" y="55.3" width="0.9" height="0.9" fill="#f0e4e0" opacity="0.7"/>
<rect x="110.6" y="55.8" width="0.9" height="0.9" fill="#f0e4e0" opacity="0.7"/>
<rect x="126.2" y="66.3" width="0.9" height="0.9" fill="#f0e4e0" opacity="0.7"/>
<rect x="131.5" y="52.1" width="0.9" height="0.9" fill="#f0e4e0" opacity="0.7"/>
<rect x="116.0" y="50.7" width="0.9" height="0.9" fill="#f0e4e0" opacity="0.7"/>
<rect x="136.4" y="64.7" width="0.9" height="0.9" fill="#f0e4e0" opacity="0.7"/>
<rect x="116.3" y="68.4" width="0.9" height="0.9" fill="#f0e4e0" opacity="0.7"/>
<rect x="112.0" y="52.0" width="0.9" height="0.9" fill="#f0e4e0" opacity="0.7"/>
<rect x="144.0" y="72.3" width="0.9" height="0.9" fill="#f0e4e0" opacity="0.7"/>
<rect x="136.4" y="81.7" width="0.9" height="0.9" fill="#f0e4e0" opacity="0.7"/>
<rect x="126.6" y="69.9" width="0.9" height="0.9" fill="#f0e4e0" opacity="0.7"/>
<rect x="125.9" y="78.2" width="0.9" height="0.9" fill="#f0e4e0" opacity="0.7"/>
<rect x="126.6" y="53.3" width="0.9" height="0.9" fill="#f0e4e0" opacity="0.7"/>
<rect x="136.6" y="50.1" width="0.9" height="0.9" fill="#f0e4e0" opacity="0.7"/>
<rect x="142.5" y="73.7" width="0.9" height="0.9" fill="#f0e4e0" opacity="0.7"/>
<rect x="136.3" y="80.8" width="0.9" height="0.9" fill="#f0e4e0" opacity="0.7"/>
<rect x="131.9" y="83.0" width="0.9" height="0.9" fill="#f0e4e0" opacity="0.7"/>
<rect x="125.1" y="80.1" width="0.9" height="0.9" fill="#f0e4e0" opacity="0.7"/>
<rect x="123.6" y="55.3" width="0.9" height="0.9" fill="#f0e4e0" opacity="0.7"/>
<rect x="121.4" y="62.5" width="0.9" height="0.9" fill="#f0e4e0" opacity="0.7"/>
<rect x="138.0" y="80.0" width="0.9" height="0.9" fill="#f0e4e0" opacity="0.7"/>
<rect x="111.9" y="64.0" width="0.9" height="0.9" fill="#f0e4e0" opacity="0.7"/>
<rect x="128.2" y="83.1" width="0.9" height="0.9" fill="#f0e4e0" opacity="0.7"/>
<rect x="135.9" y="53.2" width="0.9" height="0.9" fill="#f0e4e0" opacity="0.7"/>
<rect x="144.0" y="69.2" width="0.9" height="0.9" fill="#f0e4e0" opacity="0.7"/>
<rect x="110.4" y="58.1" width="0.9" height="0.9" fill="#f0e4e0" opacity="0.7"/>
<rect x="131.9" y="67.3" width="0.9" height="0.9" fill="#f0e4e0" opacity="0.7"/>
<rect x="119.1" y="62.0" width="0.9" height="0.9" fill="#f0e4e0" opacity="0.7"/>
<rect x="116.9" y="70.1" width="0.9" height="0.9" fill="#f0e4e0" opacity="0.7"/>
<rect x="124.8" y="83.7" width="0.9" height="0.9" fill="#f0e4e0" opacity="0.7"/>
<rect x="129.2" y="55.8" width="0.9" height="0.9" fill="#f0e4e0" opacity="0.7"/>
<rect x="111.8" y="54.7" width="0.9" height="0.9" fill="#f0e4e0" opacity="0.7"/>
<rect x="140.3" y="77.5" width="0.9" height="0.9" fill="#f0e4e0" opacity="0.7"/>
<rect x="126.1" y="54.9" width="0.9" height="0.9" fill="#f0e4e0" opacity="0.7"/>
<rect x="128.3" y="55.9" width="0.9" height="0.9" fill="#f0e4e0" opacity="0.7"/>
<rect x="130.2" y="82.8" width="0.9" height="0.9" fill="#f0e4e0" opacity="0.7"/>
<rect x="133.7" y="54.0" width="0.9" height="0.9" fill="#f0e4e0" opacity="0.7"/>
<rect x="137.6" y="57.8" width="0.9" height="0.9" fill="#f0e4e0" opacity="0.7"/>
<rect x="136.7" y="53.7" width="0.9" height="0.9" fill="#f0e4e0" opacity="0.7"/>
<rect x="134.5" y="62.8" width="0.9" height="0.9" fill="#f0e4e0" opacity="0.7"/>
<rect x="118.6" y="71.0" width="0.9" height="0.9" fill="#f0e4e0" opacity="0.7"/>
<rect x="122.6" y="66.8" width="0.9" height="0.9" fill="#f0e4e0" opacity="0.7"/>
<rect x="140.8" y="68.5" width="0.9" height="0.9" fill="#f0e4e0" opacity="0.7"/>
<rect x="135.5" y="76.4" width="0.9" height="0.9" fill="#f0e4e0" opacity="0.7"/>
<rect x="122.0" y="60.2" width="0.9" height="0.9" fill="#f0e4e0" opacity="0.7"/>
<rect x="115.7" y="68.2" width="0.9" height="0.9" fill="#f0e4e0" opacity="0.7"/>
<rect x="131.7" y="64.3" width="0.9" height="0.9" fill="#f0e4e0" opacity="0.7"/>
<rect x="140.2" y="56.9" width="0.9" height="0.9" fill="#f0e4e0" opacity="0.7"/>
<rect x="143.8" y="69.0" width="0.9" height="0.9" fill="#f0e4e0" opacity="0.7"/>
<rect x="113.0" y="83.4" width="0.9" height="0.9" fill="#f0e4e0" opacity="0.7"/>
<rect x="141.4" y="53.3" width="0.9" height="0.9" fill="#f0e4e0" opacity="0.7"/>
<rect x="130.5" y="59.1" width="0.9" height="0.9" fill="#f0e4e0" opacity="0.7"/>
<rect x="129.6" y="57.5" width="0.9" height="0.9" fill="#f0e4e0" opacity="0.7"/>
<rect x="111.0" y="76.9" width="0.9" height="0.9" fill="#f0e4e0" opacity="0.7"/>
<rect x="121.8" y="72.1" width="0.9" height="0.9" fill="#f0e4e0" opacity="0.7"/>
<rect x="120.0" y="54.0" width="0.9" height="0.9" fill="#f0e4e0" opacity="0.7"/>
<rect x="119.2" y="68.1" width="0.9" height="0.9" fill="#f0e4e0" opacity="0.7"/>
<rect x="113.9" y="63.0" width="0.9" height="0.9" fill="#f0e4e0" opacity="0.7"/>
<rect x="119.6" y="77.8" width="0.9" height="0.9" fill="#f0e4e0" opacity="0.7"/>
<rect x="132.3" y="74.2" width="0.9" height="0.9" fill="#f0e4e0" opacity="0.7"/>
<rect x="109.2" y="62.2" width="0.9" height="0.9" fill="#f0e4e0" opacity="0.7"/>
<rect x="142.2" y="67.7" width="0.9" height="0.9" fill="#f0e4e0" opacity="0.7"/>
<rect x="127.0" y="74.9" width="0.9" height="0.9" fill="#f0e4e0" opacity="0.7"/>
<rect x="121.4" y="70.2" width="0.9" height="0.9" fill="#f0e4e0" opacity="0.7"/>
<rect x="111.8" y="73.4" width="0.9" height="0.9" fill="#f0e4e0" opacity="0.7"/>
<rect x="120.9" y="58.4" width="0.9" height="0.9" fill="#f0e4e0" opacity="0.7"/>
<rect x="142.7" y="73.6" width="0.9" height="0.9" fill="#f0e4e0" opacity="0.7"/>
<rect x="138.2" y="57.1" width="0.9" height="0.9" fill="#f0e4e0" opacity="0.7"/>
<rect x="135.5" y="51.9" width="0.9" height="0.9" fill="#f0e4e0" opacity="0.7"/>
<rect x="114.6" y="54.0" width="0.9" height="0.9" fill="#f0e4e0" opacity="0.7"/>
<rect x="135.3" y="61.7" width="0.9" height="0.9" fill="#f0e4e0" opacity="0.7"/>
<rect x="138.8" y="57.3" width="0.9" height="0.9" fill="#f0e4e0" opacity="0.7"/>
<rect x="129.2" y="77.5" width="0.9" height="0.9" fill="#f0e4e0" opacity="0.7"/>
<rect x="142.0" y="72.0" width="0.9" height="0.9" fill="#f0e4e0" opacity="0.7"/>
<rect x="121.4" y="53.1" width="0.9" height="0.9" fill="#f0e4e0" opacity="0.7"/>
<rect x="128.6" y="53.3" width="0.9" height="0.9" fill="#f0e4e0" opacity="0.7"/>
<rect x="122.3" y="57.7" width="0.9" height="0.9" fill="#f0e4e0" opacity="0.7"/>
<rect x="117.0" y="51.1" width="0.9" height="0.9" fill="#f0e4e0" opacity="0.7"/>
<rect x="113.4" y="55.3" width="0.9" height="0.9" fill="#f0e4e0" opacity="0.7"/>
<rect x="118.3" y="59.6" width="0.9" height="0.9" fill="#f0e4e0" opacity="0.7"/>
<rect x="144.0" y="66.7" width="0.9" height="0.9" fill="#f0e4e0" opacity="0.7"/>
<rect x="122.2" y="52.8" width="0.9" height="0.9" fill="#f0e4e0" opacity="0.7"/>
<rect x="113.0" y="61.6" width="0.9" height="0.9" fill="#f0e4e0" opacity="0.7"/>
<rect x="133.8" y="71.0" width="0.9" height="0.9" fill="#f0e4e0" opacity="0.7"/>
<rect x="146" y="44" width="22" height="26" fill="#8a80a8"/>
<rect x="157.0" y="44" width="11.0" height="26" fill="#a096b8"/>
<rect x="145.5" y="42.5" width="23" height="2" fill="#7aa4d4"/>
<rect x="161.0" y="49.5" width="0.9" height="0.9" fill="#f0e4e0" opacity="0.7"/>
<rect x="158.0" y="65.4" width="0.9" height="0.9" fill="#f0e4e0" opacity="0.7"/>
<rect x="156.5" y="52.7" width="0.9" height="0.9" fill="#f0e4e0" opacity="0.7"/>
<rect x="159.8" y="67.8" width="0.9" height="0.9" fill="#f0e4e0" opacity="0.7"/>
<rect x="164.1" y="48.5" width="0.9" height="0.9" fill="#f0e4e0" opacity="0.7"/>
<rect x="147.8" y="61.8" width="0.9" height="0.9" fill="#f0e4e0" opacity="0.7"/>
<rect x="149.1" y="63.7" width="0.9" height="0.9" fill="#f0e4e0" opacity="0.7"/>
<rect x="160.9" y="64.8" width="0.9" height="0.9" fill="#f0e4e0" opacity="0.7"/>
<rect x="155.8" y="67.3" width="0.9" height="0.9" fill="#f0e4e0" opacity="0.7"/>
<rect x="162.0" y="65.7" width="0.9" height="0.9" fill="#f0e4e0" opacity="0.7"/>
<rect x="167.0" y="53.3" width="0.9" height="0.9" fill="#f0e4e0" opacity="0.7"/>
<rect x="164.3" y="62.5" width="0.9" height="0.9" fill="#f0e4e0" opacity="0.7"/>
<rect x="161.5" y="54.3" width="0.9" height="0.9" fill="#f0e4e0" opacity="0.7"/>
<rect x="161.2" y="61.0" width="0.9" height="0.9" fill="#f0e4e0" opacity="0.7"/>
<rect x="148.5" y="66.6" width="0.9" height="0.9" fill="#f0e4e0" opacity="0.7"/>
<rect x="148.1" y="52.4" width="0.9" height="0.9" fill="#f0e4e0" opacity="0.7"/>
<rect x="149.1" y="68.6" width="0.9" height="0.9" fill="#f0e4e0" opacity="0.7"/>
<rect x="149.4" y="51.1" width="0.9" height="0.9" fill="#f0e4e0" opacity="0.7"/>
<rect x="155.0" y="67.3" width="0.9" height="0.9" fill="#f0e4e0" opacity="0.7"/>
<rect x="166.5" y="49.2" width="0.9" height="0.9" fill="#f0e4e0" opacity="0.7"/>
<rect x="161.5" y="56.9" width="0.9" height="0.9" fill="#f0e4e0" opacity="0.7"/>
<rect x="155.6" y="64.8" width="0.9" height="0.9" fill="#f0e4e0" opacity="0.7"/>
<rect x="157.3" y="56.5" width="0.9" height="0.9" fill="#f0e4e0" opacity="0.7"/>
<rect x="158.1" y="66.2" width="0.9" height="0.9" fill="#f0e4e0" opacity="0.7"/>
<rect x="163.0" y="52.4" width="0.9" height="0.9" fill="#f0e4e0" opacity="0.7"/>
<rect x="146.3" y="65.4" width="0.9" height="0.9" fill="#f0e4e0" opacity="0.7"/>
<rect x="160.3" y="53.8" width="0.9" height="0.9" fill="#f0e4e0" opacity="0.7"/>
<rect x="163.7" y="61.8" width="0.9" height="0.9" fill="#f0e4e0" opacity="0.7"/>
<rect x="156.0" y="59.3" width="0.9" height="0.9" fill="#f0e4e0" opacity="0.7"/>
<rect x="156.2" y="64.0" width="0.9" height="0.9" fill="#f0e4e0" opacity="0.7"/>
<rect x="149.3" y="62.3" width="0.9" height="0.9" fill="#f0e4e0" opacity="0.7"/>
<rect x="154.7" y="46.4" width="0.9" height="0.9" fill="#f0e4e0" opacity="0.7"/>
<rect x="156.8" y="60.4" width="0.9" height="0.9" fill="#f0e4e0" opacity="0.7"/>
<rect x="153.7" y="54.7" width="0.9" height="0.9" fill="#f0e4e0" opacity="0.7"/>
<rect x="147.0" y="68.0" width="0.9" height="0.9" fill="#f0e4e0" opacity="0.7"/>
<rect x="163.7" y="50.6" width="0.9" height="0.9" fill="#f0e4e0" opacity="0.7"/>
<rect x="151.4" y="49.5" width="0.9" height="0.9" fill="#f0e4e0" opacity="0.7"/>
<rect x="166.0" y="45.7" width="0.9" height="0.9" fill="#f0e4e0" opacity="0.7"/>
<rect x="150.0" y="54.8" width="0.9" height="0.9" fill="#f0e4e0" opacity="0.7"/>
<rect x="157.7" y="54.1" width="0.9" height="0.9" fill="#f0e4e0" opacity="0.7"/>
<rect x="148.6" y="48.8" width="0.9" height="0.9" fill="#f0e4e0" opacity="0.7"/>
<rect x="159.6" y="61.7" width="0.9" height="0.9" fill="#f0e4e0" opacity="0.7"/>
<rect x="157.0" y="47.9" width="0.9" height="0.9" fill="#f0e4e0" opacity="0.7"/>
<rect x="167.9" y="53.2" width="0.9" height="0.9" fill="#f0e4e0" opacity="0.7"/>
<rect x="149.5" y="56.7" width="0.9" height="0.9" fill="#f0e4e0" opacity="0.7"/>
<rect x="156.8" y="55.6" width="0.9" height="0.9" fill="#f0e4e0" opacity="0.7"/>
<rect x="167.4" y="53.3" width="0.9" height="0.9" fill="#f0e4e0" opacity="0.7"/>
<ellipse cx="18" cy="74" rx="6" ry="2.5" fill="#dfe4f0" opacity="0.8"/>
<ellipse cx="80" cy="100" rx="7" ry="3" fill="#d8d060" opacity="0.8"/>
<ellipse cx="38" cy="80" rx="4" ry="2" fill="#c8c060" opacity="0.6"/>
<circle cx="31.0" cy="62.9" r="0.8" fill="#e8e0b0" opacity="0.8"/>
<circle cx="27.6" cy="95.4" r="0.8" fill="#e8e0b0" opacity="0.8"/>
<circle cx="43.8" cy="84.5" r="0.8" fill="#e8e0b0" opacity="0.8"/>
<circle cx="31.9" cy="59.2" r="0.8" fill="#e8e0b0" opacity="0.8"/>
<circle cx="28.4" cy="59.4" r="0.8" fill="#e8e0b0" opacity="0.8"/>
<circle cx="46.9" cy="68.2" r="0.8" fill="#e8e0b0" opacity="0.8"/>
<circle cx="31.5" cy="56.8" r="0.8" fill="#e8e0b0" opacity="0.8"/>
<circle cx="42.1" cy="87.5" r="0.8" fill="#e8e0b0" opacity="0.8"/>
<circle cx="38.0" cy="88.6" r="0.8" fill="#e8e0b0" opacity="0.8"/>
<circle cx="46.6" cy="56.9" r="0.8" fill="#e8e0b0" opacity="0.8"/>
<circle cx="32.2" cy="59.6" r="0.8" fill="#e8e0b0" opacity="0.8"/>
<circle cx="44.5" cy="81.4" r="0.8" fill="#e8e0b0" opacity="0.8"/>
<circle cx="30.6" cy="76.7" r="0.8" fill="#e8e0b0" opacity="0.8"/>
<circle cx="30.0" cy="55.3" r="0.8" fill="#e8e0b0" opacity="0.8"/>
<circle cx="24.7" cy="86.9" r="0.8" fill="#e8e0b0" opacity="0.8"/>
<circle cx="45.7" cy="58.7" r="0.8" fill="#e8e0b0" opacity="0.8"/>
<circle cx="33.0" cy="88.2" r="0.8" fill="#e8e0b0" opacity="0.8"/>
<circle cx="36.5" cy="57.8" r="0.8" fill="#e8e0b0" opacity="0.8"/>
<circle cx="26.1" cy="87.2" r="0.8" fill="#e8e0b0" opacity="0.8"/>
<circle cx="27.7" cy="85.0" r="0.8" fill="#e8e0b0" opacity="0.8"/>
<circle cx="40.2" cy="77.9" r="0.8" fill="#e8e0b0" opacity="0.8"/>
<circle cx="38.7" cy="65.5" r="0.8" fill="#e8e0b0" opacity="0.8"/>
<circle cx="33.8" cy="86.3" r="0.8" fill="#e8e0b0" opacity="0.8"/>
<circle cx="39.0" cy="75.9" r="0.8" fill="#e8e0b0" opacity="0.8"/>
<circle cx="35.1" cy="82.2" r="0.8" fill="#e8e0b0" opacity="0.8"/>
<circle cx="143.7" cy="60.8" r="0.7" fill="#c8d0b8" opacity="0.6"/>
<circle cx="175.8" cy="63.5" r="0.7" fill="#c8d0b8" opacity="0.6"/>
<circle cx="185.2" cy="94.3" r="0.7" fill="#c8d0b8" opacity="0.6"/>
<circle cx="114.2" cy="77.5" r="0.7" fill="#c8d0b8" opacity="0.6"/>
<circle cx="168.7" cy="96.3" r="0.7" fill="#c8d0b8" opacity="0.6"/>
<circle cx="187.0" cy="65.1" r="0.7" fill="#c8d0b8" opacity="0.6"/>
<circle cx="106.3" cy="96.7" r="0.7" fill="#c8d0b8" opacity="0.6"/>
<circle cx="210.8" cy="59.8" r="0.7" fill="#c8d0b8" opacity="0.6"/>
<circle cx="146.0" cy="67.7" r="0.7" fill="#c8d0b8" opacity="0.6"/>
<circle cx="121.4" cy="97.5" r="0.7" fill="#c8d0b8" opacity="0.6"/>
<circle cx="178.5" cy="57.0" r="0.7" fill="#c8d0b8" opacity="0.6"/>
<circle cx="151.0" cy="57.1" r="0.7" fill="#c8d0b8" opacity="0.6"/>
<circle cx="204.3" cy="98.7" r="0.7" fill="#c8d0b8" opacity="0.6"/>
<circle cx="212.2" cy="96.0" r="0.7" fill="#c8d0b8" opacity="0.6"/>
<circle cx="165.1" cy="71.8" r="0.7" fill="#c8d0b8" opacity="0.6"/>
<circle cx="180.1" cy="54.3" r="0.7" fill="#c8d0b8" opacity="0.6"/>
<circle cx="181.7" cy="80.6" r="0.7" fill="#c8d0b8" opacity="0.6"/>
<circle cx="206.9" cy="94.0" r="0.7" fill="#c8d0b8" opacity="0.6"/>
<circle cx="117.1" cy="57.0" r="0.7" fill="#c8d0b8" opacity="0.6"/>
<circle cx="127.0" cy="84.7" r="0.7" fill="#c8d0b8" opacity="0.6"/>
<circle cx="109.2" cy="97.0" r="0.7" fill="#c8d0b8" opacity="0.6"/>
<circle cx="203.9" cy="54.5" r="0.7" fill="#c8d0b8" opacity="0.6"/>
<circle cx="204.0" cy="62.8" r="0.7" fill="#c8d0b8" opacity="0.6"/>
<circle cx="129.9" cy="63.6" r="0.7" fill="#c8d0b8" opacity="0.6"/>
<circle cx="122.5" cy="77.1" r="0.7" fill="#c8d0b8" opacity="0.6"/>
<circle cx="201.1" cy="57.7" r="0.7" fill="#c8d0b8" opacity="0.6"/>
<circle cx="152.6" cy="89.7" r="0.7" fill="#c8d0b8" opacity="0.6"/>
<circle cx="172.4" cy="89.8" r="0.7" fill="#c8d0b8" opacity="0.6"/>
<circle cx="214.6" cy="78.6" r="0.7" fill="#c8d0b8" opacity="0.6"/>
<circle cx="203.9" cy="65.8" r="0.7" fill="#c8d0b8" opacity="0.6"/>
<path d="M5 80 Q30 84 60 96 L62 104 Q30 92 5 86Z" fill="#8c8cb8" opacity="0.9"/>
<path d="M0 80 Q28 90 58 110 L0 110Z" fill="url(#rd)"/>
<path d="M0 93 Q20 100 34 110 L28 110 Q15 102 0 97Z" fill="#8a6a48" opacity="0.6"/>
<path d="M0 102 Q6 105 10 110 L5 110 Q3 107 0 105Z" fill="#8a6a48" opacity="0.5"/>
<path d="M220 50 L220 110 L136 110 Q180 82 220 50Z" fill="url(#rd)"/>
<path d="M220 62 Q190 86 158 110 L164 110 Q195 88 220 70Z" fill="#6a5436" opacity="0.45"/>
<path d="M220 80 Q200 95 182 110 L188 110 Q205 97 220 88Z" fill="#6a5436" opacity="0.4"/>
<path d="M214 100 L220 96 L220 110 L208 110Z" fill="#f8e0a0" opacity="0.8"/>
<path d="M200 26 Q214 36 212 52 L218 50 Q220 34 206 24Z" fill="#ecc070"/>
<path d="M216 30 L220 30 L220 50 L216 50Z" fill="#f0d890" opacity="0.7"/>
<circle cx="149.2" cy="104.6" r="0.8" fill="#fff4b8" opacity="0.9"/>
<circle cx="161.3" cy="109.2" r="0.8" fill="#fff4b8" opacity="0.9"/>
<circle cx="207.1" cy="95.5" r="0.8" fill="#fff4b8" opacity="0.9"/>
<circle cx="167.2" cy="107.4" r="0.8" fill="#fff4b8" opacity="0.9"/>
<circle cx="211.5" cy="63.0" r="0.8" fill="#fff4b8" opacity="0.9"/>
<circle cx="196.7" cy="80.3" r="0.8" fill="#fff4b8" opacity="0.9"/>
<circle cx="214.2" cy="73.7" r="0.8" fill="#fff4b8" opacity="0.9"/>
<circle cx="213.2" cy="59.5" r="0.8" fill="#fff4b8" opacity="0.9"/>
<circle cx="193.0" cy="85.8" r="0.8" fill="#fff4b8" opacity="0.9"/>
<circle cx="186.0" cy="83.6" r="0.8" fill="#fff4b8" opacity="0.9"/>
<circle cx="178.8" cy="93.8" r="0.8" fill="#fff4b8" opacity="0.9"/>
<circle cx="193.5" cy="79.2" r="0.8" fill="#fff4b8" opacity="0.9"/>
<circle cx="220.0" cy="74.0" r="0.8" fill="#fff4b8" opacity="0.9"/>
<circle cx="219.4" cy="60.8" r="0.8" fill="#fff4b8" opacity="0.9"/>
<circle cx="212.2" cy="82.9" r="0.8" fill="#fff4b8" opacity="0.9"/>
<circle cx="217.8" cy="104.5" r="0.8" fill="#fff4b8" opacity="0.9"/>
<circle cx="216.2" cy="74.3" r="0.8" fill="#fff4b8" opacity="0.9"/>
<circle cx="203.5" cy="67.8" r="0.8" fill="#fff4b8" opacity="0.9"/>
<circle cx="207.3" cy="102.9" r="0.8" fill="#fff4b8" opacity="0.9"/>
<circle cx="192.1" cy="70.8" r="0.8" fill="#fff4b8" opacity="0.9"/>
<circle cx="197.1" cy="105.3" r="0.8" fill="#fff4b8" opacity="0.9"/>
<circle cx="148.3" cy="102.0" r="0.8" fill="#fff4b8" opacity="0.9"/>
<circle cx="218.6" cy="93.0" r="0.8" fill="#fff4b8" opacity="0.9"/>
<circle cx="204.6" cy="75.4" r="0.8" fill="#fff4b8" opacity="0.9"/>
<circle cx="203.5" cy="64.2" r="0.8" fill="#fff4b8" opacity="0.9"/>
<circle cx="217.9" cy="105.9" r="0.8" fill="#fff4b8" opacity="0.9"/>
</g></svg>
</div>

<!-- sales tab -->
<svg class="a" style="left:0;top:120px" width="740" height="40" viewBox="0 120 740 40">
  <polygon points="10,154 18,126 18,154" fill="#bad5ee"/>
  <polygon points="185,126 193.5,154 185,154" fill="#bad5ee"/>
  <rect x="18" y="126" width="167" height="28" fill="#4b8ecf"/>
  <rect x="2" y="153.5" width="736" height="1.5" fill="#5b9bd8"/>
</svg>
<div class="a tabtxt" style="left:71px;top:134px">销售信息</div>

<!-- sales panel -->
<div class="a" style="left:2px;top:155px;width:736px;height:165px;background:rgba(242,246,250,0.5);border:1px solid #dce8f3;border-top:none"></div>
<div class="a" style="left:2px;top:178px;width:736px;height:1px;background:#e3ecf4"></div>
<div class="a" style="left:35px;top:161.5px;font-size:8.8px;line-height:11px;color:#a0a0a0">销售信息</div>

<div class="a" style="left:3px;top:178.5px;width:734px;height:23.5px;background:rgba(247,250,253,0.55)"></div>
<div class="a" style="left:3px;top:202.0px;width:734px;height:23.5px;background:#efefef"></div>
<div class="a" style="left:3px;top:225.5px;width:734px;height:23.5px;background:rgba(247,250,253,0.55)"></div>
<div class="a" style="left:3px;top:249.0px;width:734px;height:23.5px;background:#efefef"></div>
<div class="a" style="left:3px;top:272.5px;width:734px;height:23.5px;background:rgba(247,250,253,0.55)"></div>
<div class="a" style="left:3px;top:296.0px;width:734px;height:23.5px;background:#efefef"></div>
<div class="a" style="left:187px;top:178.5px;width:1px;height:141.0px;background:#dde9f4"></div>
<div class="a" style="left:370px;top:178.5px;width:1px;height:141.0px;background:#dde9f4"></div>
<div class="a" style="left:553px;top:178.5px;width:1px;height:141.0px;background:#dde9f4"></div>
<div class="a lbl" style="left:2px;top:185.5px;width:119px">总套数：</div>
<div class="a val" style="left:127px;top:185.5px">890</div>
<div class="a lbl" style="left:187px;top:185.5px;width:117px">总面积：</div>
<div class="a val" style="left:311px;top:185.5px">58929.13</div>
<div class="a lbl" style="left:370px;top:185.5px;width:118px">住宅套数：</div>
<div class="a val" style="left:494px;top:185.5px">471</div>
<div class="a lbl" style="left:553px;top:185.5px;width:118px">住宅面积：</div>
<div class="a val" style="left:679px;top:185.5px">43757.48</div>
<div class="a lbl" style="left:2px;top:209.0px;width:119px">可售总套数：</div>
<div class="a val" style="left:127px;top:209.0px">489</div>
<div class="a lbl" style="left:187px;top:209.0px;width:117px">可售总面积：</div>
<div class="a val" style="left:311px;top:209.0px">29175.28</div>
<div class="a lbl" style="left:370px;top:209.0px;width:118px">可售住宅套数：</div>
<div class="a val" style="left:494px;top:209.0px">193</div>
<div class="a lbl" style="left:553px;top:209.0px;width:118px">可售住宅面积：</div>
<div class="a val" style="left:679px;top:209.0px">18211.44</div>
<div class="a lbl" style="left:2px;top:232.5px;width:119px">预定总套数：</div>
<div class="a val" style="left:127px;top:232.5px">0</div>
<div class="a lbl" style="left:187px;top:232.5px;width:117px">预定总面积：</div>
<div class="a val" style="left:311px;top:232.5px">0</div>
<div class="a lbl" style="left:370px;top:232.5px;width:118px">预定住宅套数：</div>
<div class="a val" style="left:494px;top:232.5px">0</div>
<div class="a lbl" style="left:553px;top:232.5px;width:118px">预定住宅面积：</div>
<div class="a val" style="left:679px;top:232.5px">0</div>
<div class="a lbl" style="left:2px;top:256.0px;width:119px">已售总套数：</div>
<div class="a val" style="left:127px;top:256.0px">401</div>
<div class="a lbl" style="left:187px;top:256.0px;width:117px">已售总面积：</div>
<div class="a val" style="left:311px;top:256.0px">29753.85</div>
<div class="a lbl" style="left:370px;top:256.0px;width:118px">已售住宅套数：</div>
<div class="a val" style="left:494px;top:256.0px">278</div>
<div class="a lbl" style="left:553px;top:256.0px;width:118px">已售住宅面积：</div>
<div class="a val" style="left:679px;top:256.0px">25546.04</div>
<div class="a lbl" style="left:2px;top:279.5px;width:119px">已登记总套数：</div>
<div class="a val" style="left:127px;top:279.5px">311</div>
<div class="a lbl" style="left:187px;top:279.5px;width:117px">已登记总面积：</div>
<div class="a val" style="left:311px;top:279.5px">25790.04</div>
<div class="a lbl" style="left:370px;top:279.5px;width:118px">已登记住宅套数：</div>
<div class="a val" style="left:494px;top:279.5px">263</div>
<div class="a lbl" style="left:553px;top:279.5px;width:118px">已登记住宅面积：</div>
<div class="a val" style="left:679px;top:279.5px">24145.44</div>
<div class="a lbl" style="left:2px;top:303.0px;width:119px">合同撤销总套数：</div>
<div class="a lbl" style="left:187px;top:303.0px;width:117px">定金逾期总次数：</div>

<!-- open units tab -->
<svg class="a" style="left:0;top:325px" width="740" height="40" viewBox="0 325 740 40">
  <polygon points="10,360 18,332 18,360" fill="#c4d9ef"/>
  <polygon points="185,332 193.5,360 185,360" fill="#c4d9ef"/><polygon points="193.5,360 196.3,349 197,360" fill="#c4d9ef"/>
  <rect x="18" y="332" width="167" height="28" fill="#6bb3b2"/>
</svg>
<div class="a tabtxt" style="left:71px;top:341px">开盘单元</div>

<div class="a" style="left:2px;top:360px;width:736px;height:24.5px;background:#eef5fa"></div>
<div class="a" style="left:2px;top:360px;width:736px;height:1.5px;background:#74b6b4"></div>
<div class="a" style="left:2px;top:384.5px;width:728px;height:23.5px;background:#b5d9da"></div>
<div class="a" style="left:2px;top:408px;width:728px;height:24px;background:#fbfcfd"></div>
<div class="a" style="left:2px;top:432px;width:728px;height:23.5px;background:#fbfcfd"></div>
<div class="a" style="left:730px;top:384.5px;width:8px;height:71.0px;background:#e6e6e6"></div>
<div class="a" style="left:2px;top:455.5px;width:736px;height:4.5px;background:linear-gradient(#7fbfbd 0,#80bfbd 50%,#a6d2d0 60%,#a6d2d0 100%)"></div>
<div class="a" style="left:2px;top:361.5px;width:1px;height:94px;background:#d6e6f4"></div>
<div class="a" style="left:83px;top:361.5px;width:1px;height:94.0px;background:#dae8f3"></div>
<div class="a" style="left:283px;top:361.5px;width:1px;height:94.0px;background:#dae8f3"></div>
<div class="a" style="left:356px;top:361.5px;width:1px;height:94.0px;background:#dae8f3"></div>
<div class="a" style="left:415px;top:361.5px;width:1px;height:94.0px;background:#dae8f3"></div>
<div class="a" style="left:484px;top:361.5px;width:1px;height:94.0px;background:#dae8f3"></div>
<div class="a" style="left:575px;top:361.5px;width:1px;height:94.0px;background:#dae8f3"></div>
<div class="a" style="left:666px;top:361.5px;width:1px;height:94.0px;background:#dae8f3"></div>
<div class="a" style="left:730px;top:384.5px;width:1px;height:71.0px;background:#dae8f3"></div>
<div class="a th" style="left:2px;top:368px;width:81px">编号</div>
<div class="a th" style="left:83px;top:368px;width:200px">预售许可证/房地产权证</div>
<div class="a th" style="left:283px;top:368px;width:73px">开盘日期</div>
<div class="a th" style="left:356px;top:368px;width:59px">总套数</div>
<div class="a th" style="left:415px;top:368px;width:69px">住宅套数</div>
<div class="a th" style="left:484px;top:368px;width:91px">总面积</div>
<div class="a th" style="left:575px;top:368px;width:91px">住宅面积</div>
<div class="a th" style="left:666px;top:368px;width:64px">销售状态</div>
<div class="a td" style="left:5.5px;top:391.2px;width:81px;color:#5a5a5a;">025628</div>
<div class="a td" style="left:83px;top:391.2px;width:200px;">沪(2025)青字不动产权第014885号</div>
<div class="a td" style="left:283px;top:391.2px;width:73px;">2025-07-03</div>
<div class="a td" style="left:356px;top:391.2px;width:59px;">419</div>
<div class="a td" style="left:415px;top:391.2px;width:69px;">0</div>
<div class="a td" style="left:484px;top:391.2px;width:91px;">15171.65</div>
<div class="a td" style="left:575px;top:391.2px;width:91px;">0</div>
<div class="a td st" style="left:664px;top:391.2px;width:64px;">在售</div>
<div class="a td" style="left:5.5px;top:414.7px;width:81px;color:#5a5a5a;">023799</div>
<div class="a td" style="left:83px;top:414.7px;width:200px;">青浦房管(2023)预字0000049号</div>
<div class="a td" style="left:283px;top:414.7px;width:73px;">2023-03-31</div>
<div class="a td" style="left:356px;top:414.7px;width:59px;">192</div>
<div class="a td" style="left:415px;top:414.7px;width:69px;">192</div>
<div class="a td" style="left:484px;top:414.7px;width:91px;">17677.76</div>
<div class="a td" style="left:575px;top:414.7px;width:91px;">17677.76</div>
<div class="a td st" style="left:664px;top:414.7px;width:64px;">在售</div>
<div class="a td" style="left:5.5px;top:438.7px;width:81px;color:#5a5a5a;">023475</div>
<div class="a td" style="left:83px;top:438.7px;width:200px;">青浦房管(2022)预字0000261号</div>
<div class="a td" style="left:283px;top:438.7px;width:73px;">2022-11-08</div>
<div class="a td" style="left:356px;top:438.7px;width:59px;">279</div>
<div class="a td" style="left:415px;top:438.7px;width:69px;">279</div>
<div class="a td" style="left:484px;top:438.7px;width:91px;">26079.72</div>
<div class="a td" style="left:575px;top:438.7px;width:91px;"></div>
<div class="a td st" style="left:664px;top:438.7px;width:64px;">在售</div>


<!-- watermark -->
<svg class="a" style="left:450px;top:414px" width="35" height="30" viewBox="450 414 35 30">
  <path d="M456.2 433.5 L455.5 437.2 L459.8 434.6Z" fill="#a6a6a6"/>
  <ellipse cx="462.5" cy="426.4" rx="9.2" ry="7.6" fill="#a6a6a6"/>
  <ellipse cx="472.4" cy="433.2" rx="8.6" ry="7.4" fill="#fbfcfd"/>
  <path d="M474.8 438.5 L477.2 441.5 L477.6 437.5Z" fill="#a6a6a6"/>
  <ellipse cx="472.4" cy="433.2" rx="7.6" ry="6.5" fill="#a6a6a6"/>
  <circle cx="459.2" cy="424.4" r="1.05" fill="#fbfcfd"/>
  <circle cx="466.0" cy="424.4" r="1.05" fill="#fbfcfd"/>
  <circle cx="469.4" cy="431.6" r="0.95" fill="#fbfcfd"/>
  <circle cx="475.2" cy="431.6" r="0.95" fill="#fbfcfd"/>
</svg>
<div class="a wm1" style="left:486px;top:420px">公众号</div>
<div class="a wm1" style="left:555.5px;top:420px">·</div>
<div class="a wm1" id="wm1" style="left:573.3px;top:420px">凤凰网房产上海</div>
<div class="a wm2" style="left:562px;top:437px">搜狐号</div>
<div class="a wm2" style="left:609px;top:437.5px;font-weight:normal;font-size:13px">@</div>
<div class="a wm2" id="wm2" style="left:623px;top:437px">搜狐焦点宿州站</div>
</body>
</html>
